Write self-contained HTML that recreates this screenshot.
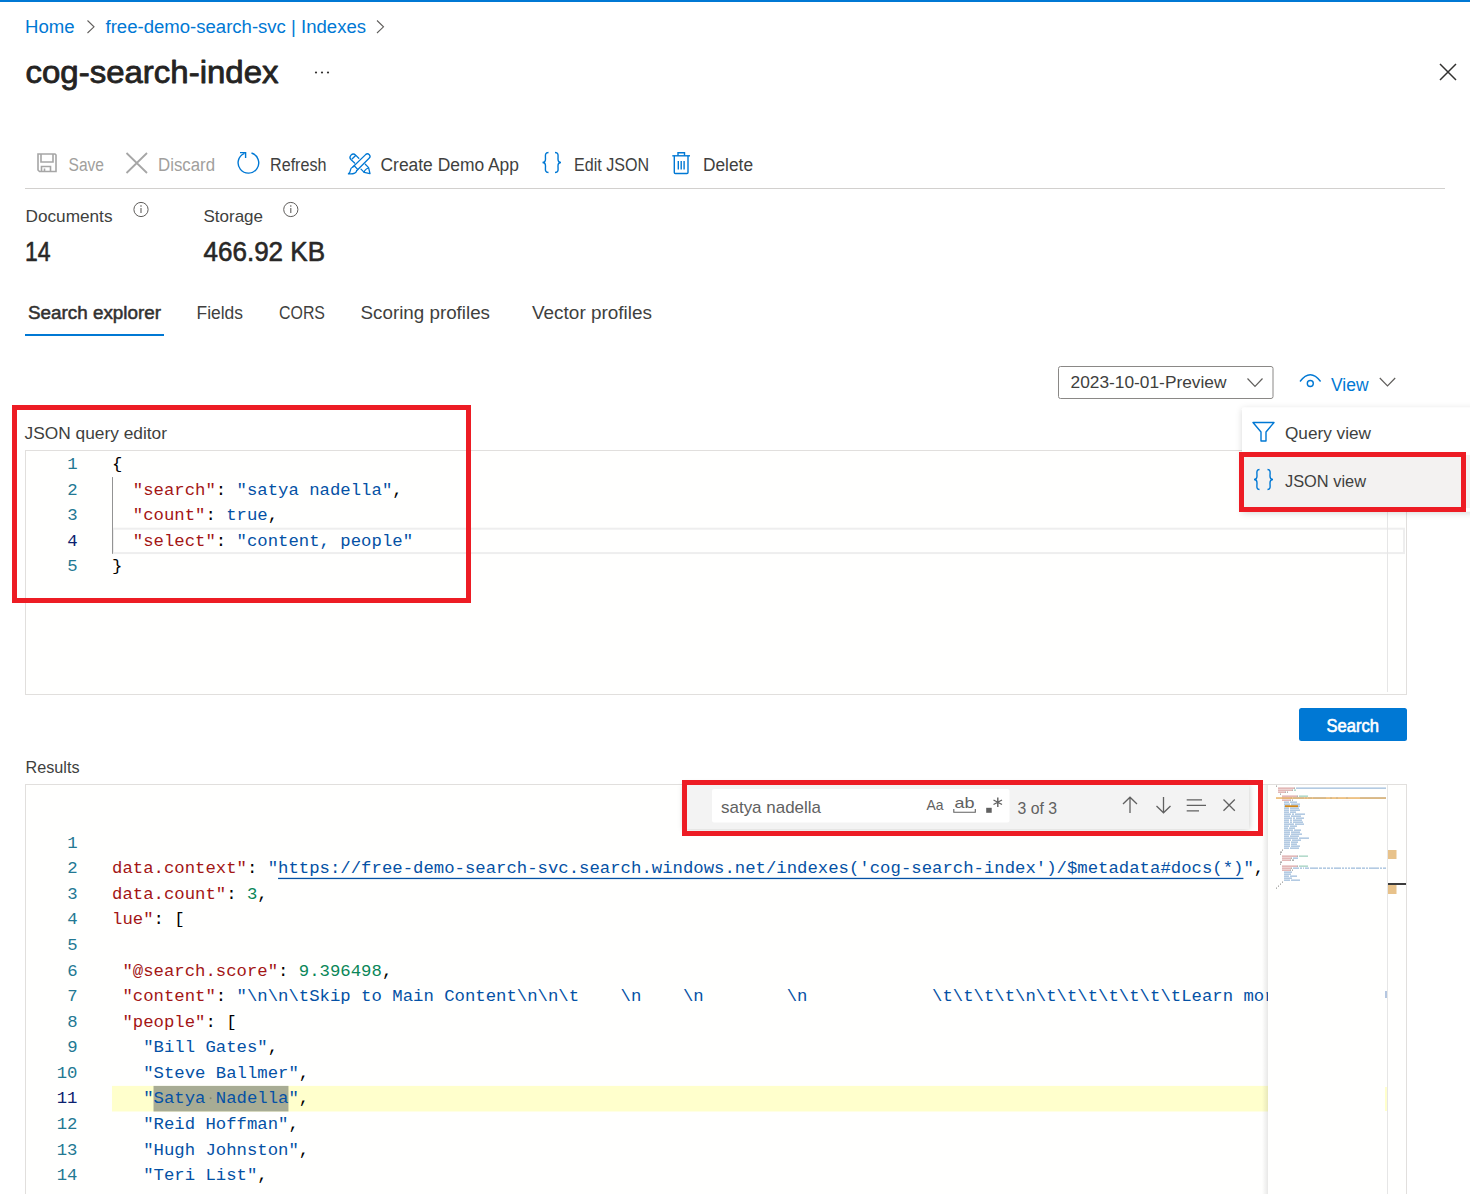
<!DOCTYPE html>
<html><head><meta charset="utf-8"><title>cog-search-index</title>
<style>
html,body{margin:0;padding:0;background:#ffffff;width:1470px;height:1194px;overflow:hidden;}
svg{display:block;font-family:"Liberation Sans",sans-serif;}
</style></head>
<body>
<svg width="1470" height="1194" viewBox="0 0 1470 1194">
<rect x="0" y="0" width="1470" height="1194" fill="#ffffff"/>
<rect x="0" y="0" width="1470" height="2" fill="#0078d4"/>
<text x="25" y="33" font-size="18" fill="#0078d4" textLength="49.5" lengthAdjust="spacingAndGlyphs">Home</text>
<path d="M87.5 20.5 L94 26.8 L87.5 33" stroke="#605e5c" stroke-width="1.1" fill="none"/>
<text x="105.5" y="33" font-size="18" fill="#0078d4" textLength="260.5" lengthAdjust="spacingAndGlyphs">free-demo-search-svc | Indexes</text>
<path d="M377 20.5 L383.5 26.8 L377 33" stroke="#605e5c" stroke-width="1.1" fill="none"/>
<text x="25.5" y="83" font-size="31" fill="#242322" textLength="253" lengthAdjust="spacingAndGlyphs" stroke="#242322" stroke-width="0.8" stroke-linejoin="round">cog-search-index</text>
<circle cx="316" cy="72.5" r="1.1" fill="#323130"/>
<circle cx="322" cy="72.5" r="1.1" fill="#323130"/>
<circle cx="328" cy="72.5" r="1.1" fill="#323130"/>
<path d="M1440 64 L1456 80 M1456 64 L1440 80" stroke="#323130" stroke-width="1.5" fill="none"/>
<g fill="none" stroke="#a6a6a6" stroke-width="1.6"><path d="M38 154 H55 L56 155 V171.5 H39.5 L38 170 Z"/><path d="M41 154 V162 H53 V154"/><path d="M41.5 171.5 V166.5 H50.5 V171.5 M44.5 168.5 V171.5"/></g>
<text x="68.5" y="171" font-size="18" fill="#a19f9d" textLength="35.5" lengthAdjust="spacingAndGlyphs">Save</text>
<path d="M126.5 153 L147 173 M147 153 L126.5 173" stroke="#a6a6a6" stroke-width="1.8" fill="none"/>
<text x="158" y="171" font-size="18" fill="#a19f9d" textLength="57" lengthAdjust="spacingAndGlyphs">Discard</text>
<path d="M251.5 153 A10.3 10.3 0 1 1 244.5 153.3" stroke="#0078d4" stroke-width="1.4" fill="none"/><path d="M240 152.6 H245.6 V158" stroke="#0078d4" stroke-width="1.4" fill="none"/>
<text x="270" y="171" font-size="18" fill="#403f3e" textLength="56.5" lengthAdjust="spacingAndGlyphs">Refresh</text>
<g fill="none" stroke="#0078d4" stroke-width="1.3" stroke-linejoin="round" stroke-linecap="round"><path d="M352.8 167 L365.6 154.6 Q367.5 152.9 369.3 154.7 Q371 156.5 369.1 158.3 L356.6 170.7"/><path d="M354.2 165.7 L357.7 169.4"/><path d="M352.8 167 Q350.6 168 350.4 170.3 Q350.2 172.6 348.4 173.8 Q352.3 174.3 354.7 173.1 Q356.5 172.2 356.6 170.7"/><path d="M358.8 158.3 L355.6 155.1 Q353.3 152.8 351 155.1 Q348.8 157.4 351.1 159.7 L354.6 163"/><path d="M352.3 158.8 L355.6 155.5"/><path d="M365.3 164.3 L368.6 167.6 L370 173.6 L364.2 172.4 L361 169.1"/><path d="M364.2 172.4 Q364.3 169.8 368.3 168"/></g>
<text x="380.5" y="171" font-size="18" fill="#403f3e" textLength="138.5" lengthAdjust="spacingAndGlyphs">Create Demo App</text>
<g fill="none" stroke="#0078d4" stroke-width="1.4"><path d="M548.5 152.5 C544.5 152.5 545.5 156 545.5 159 C545.5 161.5 544.5 162.5 542.5 162.5 C544.5 162.5 545.5 163.5 545.5 166 C545.5 169 544.5 172.5 548.5 172.5"/><path d="M555 152.5 C559 152.5 558 156 558 159 C558 161.5 559 162.5 561 162.5 C559 162.5 558 163.5 558 166 C558 169 559 172.5 555 172.5"/></g>
<text x="574" y="171" font-size="18" fill="#403f3e" textLength="75" lengthAdjust="spacingAndGlyphs">Edit JSON</text>
<g fill="none" stroke="#0078d4" stroke-width="1.4"><path d="M672.3 155.8 H690"/><path d="M678 155.8 V152.8 H684.5 V155.8"/><path d="M674.3 155.8 V172.5 Q674.3 173.5 675.3 173.5 H687 Q688 173.5 688 172.5 V155.8"/><path d="M678.3 161 V169.5 M681.2 161 V169.5 M684.1 161 V169.5"/></g>
<text x="703" y="171" font-size="18" fill="#403f3e" textLength="50" lengthAdjust="spacingAndGlyphs">Delete</text>
<rect x="25" y="188" width="1420" height="1" fill="#d2d0ce"/>
<text x="25.5" y="222.2" font-size="17" fill="#403f3e" textLength="87" lengthAdjust="spacingAndGlyphs">Documents</text>
<circle cx="141" cy="209.5" r="7.1" stroke="#605e5c" stroke-width="1" fill="none"/><path d="M141 208 V213" stroke="#605e5c" stroke-width="1.1"/><circle cx="141" cy="206" r="0.8" fill="#605e5c"/>
<text x="203.5" y="222.2" font-size="17" fill="#403f3e" textLength="59.5" lengthAdjust="spacingAndGlyphs">Storage</text>
<circle cx="290.8" cy="209.5" r="7.1" stroke="#605e5c" stroke-width="1" fill="none"/><path d="M290.8 208 V213" stroke="#605e5c" stroke-width="1.1"/><circle cx="290.8" cy="206" r="0.8" fill="#605e5c"/>
<text x="25" y="260.7" font-size="27" fill="#292827" textLength="25.5" lengthAdjust="spacingAndGlyphs" stroke="#292827" stroke-width="0.6" stroke-linejoin="round">14</text>
<text x="203.5" y="260.7" font-size="27" fill="#292827" textLength="121.5" lengthAdjust="spacingAndGlyphs" stroke="#292827" stroke-width="0.6" stroke-linejoin="round">466.92 KB</text>
<text x="28" y="318.7" font-size="18" fill="#323130" textLength="133" lengthAdjust="spacingAndGlyphs" stroke="#323130" stroke-width="0.5" stroke-linejoin="round">Search explorer</text>
<rect x="25" y="334" width="139" height="2" fill="#0078d4"/>
<text x="196.5" y="318.7" font-size="18" fill="#403f3e" textLength="46.5" lengthAdjust="spacingAndGlyphs">Fields</text>
<text x="279" y="318.7" font-size="18" fill="#403f3e" textLength="46" lengthAdjust="spacingAndGlyphs">CORS</text>
<text x="360.5" y="318.7" font-size="18" fill="#403f3e" textLength="129.5" lengthAdjust="spacingAndGlyphs">Scoring profiles</text>
<text x="532" y="318.7" font-size="18" fill="#403f3e" textLength="120" lengthAdjust="spacingAndGlyphs">Vector profiles</text>
<rect x="1058.5" y="366.5" width="214.5" height="32" rx="2" fill="#fff" stroke="#8a8886" stroke-width="1"/>
<text x="1070.5" y="388" font-size="17" fill="#403f3e" textLength="156" lengthAdjust="spacingAndGlyphs">2023-10-01-Preview</text>
<path d="M1247.5 378.5 L1255 386.3 L1262.5 378.5" stroke="#605e5c" stroke-width="1.2" fill="none"/>
<g fill="none" stroke="#0078d4" stroke-width="1.4"><path d="M1300 381.5 Q1310.3 368 1320.6 381.5"/><circle cx="1310.3" cy="383.5" r="3"/></g>
<text x="1331" y="390.5" font-size="18" fill="#0078d4" textLength="37.5" lengthAdjust="spacingAndGlyphs">View</text>
<path d="M1379.8 378 L1387.5 386 L1395.2 378" stroke="#605e5c" stroke-width="1.2" fill="none"/>
<defs><filter id="sh" x="-10%" y="-10%" width="120%" height="130%"><feDropShadow dx="0" dy="1.5" stdDeviation="3" flood-color="#000" flood-opacity="0.16"/></filter><filter id="sh2" x="-5%" y="-30%" width="110%" height="160%"><feDropShadow dx="0" dy="0" stdDeviation="3" flood-color="#000" flood-opacity="0.22"/></filter><linearGradient id="mmsh" x1="0" x2="1" y1="0" y2="0"><stop offset="0" stop-color="#000" stop-opacity="0"/><stop offset="1" stop-color="#000" stop-opacity="0.09"/></linearGradient></defs>
<text x="24.5" y="438.7" font-size="17" fill="#403f3e" textLength="142.5" lengthAdjust="spacingAndGlyphs">JSON query editor</text>
<rect x="25.5" y="450.5" width="1381" height="244" fill="#fffffe" stroke="#e1dfdd" stroke-width="1"/>
<rect x="113" y="528.71" width="1291" height="24.37" fill="none" stroke="#eeeeee" stroke-width="2"/>
<rect x="112" y="477.07" width="1" height="76.71" fill="#939393"/>
<text x="77.5" y="469.00" font-family="Liberation Mono" font-size="17.3" fill="#237893" text-anchor="end">1</text>
<text x="112.00" y="469.00" font-family="Liberation Mono" font-size="17.3" fill="#000000" textLength="10.38" lengthAdjust="spacing" xml:space="preserve">{</text>
<text x="77.5" y="494.57" font-family="Liberation Mono" font-size="17.3" fill="#237893" text-anchor="end">2</text>
<text x="132.76" y="494.57" font-family="Liberation Mono" font-size="17.3" fill="#a31515" textLength="83.04" lengthAdjust="spacing" xml:space="preserve">&quot;search&quot;</text>
<text x="215.80" y="494.57" font-family="Liberation Mono" font-size="17.3" fill="#000000" textLength="20.76" lengthAdjust="spacing" xml:space="preserve">: </text>
<text x="236.56" y="494.57" font-family="Liberation Mono" font-size="17.3" fill="#0451a5" textLength="155.70" lengthAdjust="spacing" xml:space="preserve">&quot;satya nadella&quot;</text>
<text x="392.26" y="494.57" font-family="Liberation Mono" font-size="17.3" fill="#000000" textLength="10.38" lengthAdjust="spacing" xml:space="preserve">,</text>
<text x="77.5" y="520.14" font-family="Liberation Mono" font-size="17.3" fill="#237893" text-anchor="end">3</text>
<text x="132.76" y="520.14" font-family="Liberation Mono" font-size="17.3" fill="#a31515" textLength="72.66" lengthAdjust="spacing" xml:space="preserve">&quot;count&quot;</text>
<text x="205.42" y="520.14" font-family="Liberation Mono" font-size="17.3" fill="#000000" textLength="20.76" lengthAdjust="spacing" xml:space="preserve">: </text>
<text x="226.18" y="520.14" font-family="Liberation Mono" font-size="17.3" fill="#0451a5" textLength="41.52" lengthAdjust="spacing" xml:space="preserve">true</text>
<text x="267.70" y="520.14" font-family="Liberation Mono" font-size="17.3" fill="#000000" textLength="10.38" lengthAdjust="spacing" xml:space="preserve">,</text>
<text x="77.5" y="545.71" font-family="Liberation Mono" font-size="17.3" fill="#0b216f" text-anchor="end">4</text>
<text x="132.76" y="545.71" font-family="Liberation Mono" font-size="17.3" fill="#a31515" textLength="83.04" lengthAdjust="spacing" xml:space="preserve">&quot;select&quot;</text>
<text x="215.80" y="545.71" font-family="Liberation Mono" font-size="17.3" fill="#000000" textLength="20.76" lengthAdjust="spacing" xml:space="preserve">: </text>
<text x="236.56" y="545.71" font-family="Liberation Mono" font-size="17.3" fill="#0451a5" textLength="176.46" lengthAdjust="spacing" xml:space="preserve">&quot;content, people&quot;</text>
<text x="77.5" y="571.28" font-family="Liberation Mono" font-size="17.3" fill="#237893" text-anchor="end">5</text>
<text x="112.00" y="571.28" font-family="Liberation Mono" font-size="17.3" fill="#000000" textLength="10.38" lengthAdjust="spacing" xml:space="preserve">}</text>
<rect x="1387" y="451" width="1" height="241" fill="#e6e6e6"/>
<rect x="1299" y="708" width="108" height="33" rx="2.5" fill="#0078d4"/>
<text x="1326.5" y="732" font-size="17.5" fill="#ffffff" textLength="52.5" lengthAdjust="spacingAndGlyphs" stroke="#ffffff" stroke-width="0.6" stroke-linejoin="round">Search</text>
<text x="25.5" y="773" font-size="17" fill="#403f3e" textLength="54" lengthAdjust="spacingAndGlyphs">Results</text>
<rect x="25.5" y="784.5" width="1381" height="500" fill="#fffffe" stroke="#e1dfdd" stroke-width="1"/>
<rect x="112" y="1085.9" width="1156" height="25.57" fill="#ffffcc"/>
<rect x="153.52" y="1085.9" width="134.94" height="25.57" fill="#a8ac94"/>
<circle cx="210.61" cy="1098.3" r="1" fill="#7f8472"/>
<clipPath id="rclip"><rect x="100" y="785" width="1168" height="420"/></clipPath>
<g clip-path="url(#rclip)">
<text x="112.00" y="873.27" font-family="Liberation Mono" font-size="17.3" fill="#a31515" textLength="134.94" lengthAdjust="spacing" xml:space="preserve">data.context&quot;</text>
<text x="246.94" y="873.27" font-family="Liberation Mono" font-size="17.3" fill="#000000" textLength="20.76" lengthAdjust="spacing" xml:space="preserve">: </text>
<text x="267.70" y="873.27" font-family="Liberation Mono" font-size="17.3" fill="#0451a5" textLength="10.38" lengthAdjust="spacing" xml:space="preserve">&quot;</text>
<text x="278.08" y="873.27" font-family="Liberation Mono" font-size="17.3" fill="#0451a5" textLength="62.28" lengthAdjust="spacing" xml:space="preserve">https:</text>
<text x="340.36" y="873.27" font-family="Liberation Mono" font-size="17.3" fill="#0451a5" textLength="903.06" lengthAdjust="spacing" xml:space="preserve">//free-demo-search-svc.search.windows.net/indexes(&#x27;cog-search-index&#x27;)/$metadata#docs(*)</text>
<text x="1243.42" y="873.27" font-family="Liberation Mono" font-size="17.3" fill="#0451a5" textLength="10.38" lengthAdjust="spacing" xml:space="preserve">&quot;</text>
<text x="1253.80" y="873.27" font-family="Liberation Mono" font-size="17.3" fill="#000000" textLength="10.38" lengthAdjust="spacing" xml:space="preserve">,</text>
<text x="112.00" y="898.84" font-family="Liberation Mono" font-size="17.3" fill="#a31515" textLength="114.18" lengthAdjust="spacing" xml:space="preserve">data.count&quot;</text>
<text x="226.18" y="898.84" font-family="Liberation Mono" font-size="17.3" fill="#000000" textLength="20.76" lengthAdjust="spacing" xml:space="preserve">: </text>
<text x="246.94" y="898.84" font-family="Liberation Mono" font-size="17.3" fill="#098658" textLength="10.38" lengthAdjust="spacing" xml:space="preserve">3</text>
<text x="257.32" y="898.84" font-family="Liberation Mono" font-size="17.3" fill="#000000" textLength="10.38" lengthAdjust="spacing" xml:space="preserve">,</text>
<text x="112.00" y="924.41" font-family="Liberation Mono" font-size="17.3" fill="#a31515" textLength="41.52" lengthAdjust="spacing" xml:space="preserve">lue&quot;</text>
<text x="153.52" y="924.41" font-family="Liberation Mono" font-size="17.3" fill="#000000" textLength="20.76" lengthAdjust="spacing" xml:space="preserve">: </text>
<text x="174.28" y="924.41" font-family="Liberation Mono" font-size="17.3" fill="#000000" textLength="10.38" lengthAdjust="spacing" xml:space="preserve">[</text>
<text x="122.38" y="975.55" font-family="Liberation Mono" font-size="17.3" fill="#a31515" textLength="155.70" lengthAdjust="spacing" xml:space="preserve">&quot;@search.score&quot;</text>
<text x="278.08" y="975.55" font-family="Liberation Mono" font-size="17.3" fill="#000000" textLength="20.76" lengthAdjust="spacing" xml:space="preserve">: </text>
<text x="298.84" y="975.55" font-family="Liberation Mono" font-size="17.3" fill="#098658" textLength="83.04" lengthAdjust="spacing" xml:space="preserve">9.396498</text>
<text x="381.88" y="975.55" font-family="Liberation Mono" font-size="17.3" fill="#000000" textLength="10.38" lengthAdjust="spacing" xml:space="preserve">,</text>
<text x="122.38" y="1001.12" font-family="Liberation Mono" font-size="17.3" fill="#a31515" textLength="93.42" lengthAdjust="spacing" xml:space="preserve">&quot;content&quot;</text>
<text x="215.80" y="1001.12" font-family="Liberation Mono" font-size="17.3" fill="#000000" textLength="20.76" lengthAdjust="spacing" xml:space="preserve">: </text>
<text x="236.56" y="1001.12" font-family="Liberation Mono" font-size="17.3" fill="#0451a5" textLength="1038.00" lengthAdjust="spacing" xml:space="preserve">&quot;\n\n\tSkip to Main Content\n\n\t    \n    \n        \n            \t\t\t\t\n\t\t\t\t\t\t\tLearn mor</text>
<text x="122.38" y="1026.69" font-family="Liberation Mono" font-size="17.3" fill="#a31515" textLength="83.04" lengthAdjust="spacing" xml:space="preserve">&quot;people&quot;</text>
<text x="205.42" y="1026.69" font-family="Liberation Mono" font-size="17.3" fill="#000000" textLength="20.76" lengthAdjust="spacing" xml:space="preserve">: </text>
<text x="226.18" y="1026.69" font-family="Liberation Mono" font-size="17.3" fill="#000000" textLength="10.38" lengthAdjust="spacing" xml:space="preserve">[</text>
<text x="143.14" y="1052.26" font-family="Liberation Mono" font-size="17.3" fill="#0451a5" textLength="124.56" lengthAdjust="spacing" xml:space="preserve">&quot;Bill Gates&quot;</text>
<text x="267.70" y="1052.26" font-family="Liberation Mono" font-size="17.3" fill="#000000" textLength="10.38" lengthAdjust="spacing" xml:space="preserve">,</text>
<text x="143.14" y="1077.83" font-family="Liberation Mono" font-size="17.3" fill="#0451a5" textLength="155.70" lengthAdjust="spacing" xml:space="preserve">&quot;Steve Ballmer&quot;</text>
<text x="298.84" y="1077.83" font-family="Liberation Mono" font-size="17.3" fill="#000000" textLength="10.38" lengthAdjust="spacing" xml:space="preserve">,</text>
<text x="143.14" y="1103.40" font-family="Liberation Mono" font-size="17.3" fill="#0451a5" textLength="155.70" lengthAdjust="spacing" xml:space="preserve">&quot;Satya Nadella&quot;</text>
<text x="298.84" y="1103.40" font-family="Liberation Mono" font-size="17.3" fill="#000000" textLength="10.38" lengthAdjust="spacing" xml:space="preserve">,</text>
<text x="143.14" y="1128.97" font-family="Liberation Mono" font-size="17.3" fill="#0451a5" textLength="145.32" lengthAdjust="spacing" xml:space="preserve">&quot;Reid Hoffman&quot;</text>
<text x="288.46" y="1128.97" font-family="Liberation Mono" font-size="17.3" fill="#000000" textLength="10.38" lengthAdjust="spacing" xml:space="preserve">,</text>
<text x="143.14" y="1154.54" font-family="Liberation Mono" font-size="17.3" fill="#0451a5" textLength="155.70" lengthAdjust="spacing" xml:space="preserve">&quot;Hugh Johnston&quot;</text>
<text x="298.84" y="1154.54" font-family="Liberation Mono" font-size="17.3" fill="#000000" textLength="10.38" lengthAdjust="spacing" xml:space="preserve">,</text>
<text x="143.14" y="1180.11" font-family="Liberation Mono" font-size="17.3" fill="#0451a5" textLength="114.18" lengthAdjust="spacing" xml:space="preserve">&quot;Teri List&quot;</text>
<text x="257.32" y="1180.11" font-family="Liberation Mono" font-size="17.3" fill="#000000" textLength="10.38" lengthAdjust="spacing" xml:space="preserve">,</text>
<rect x="278.08000000000004" y="877.8" width="965.34" height="1.3" fill="#0451a5"/>
</g>
<text x="77.5" y="847.70" font-family="Liberation Mono" font-size="17.3" fill="#237893" text-anchor="end">1</text>
<text x="77.5" y="873.27" font-family="Liberation Mono" font-size="17.3" fill="#237893" text-anchor="end">2</text>
<text x="77.5" y="898.84" font-family="Liberation Mono" font-size="17.3" fill="#237893" text-anchor="end">3</text>
<text x="77.5" y="924.41" font-family="Liberation Mono" font-size="17.3" fill="#237893" text-anchor="end">4</text>
<text x="77.5" y="949.98" font-family="Liberation Mono" font-size="17.3" fill="#237893" text-anchor="end">5</text>
<text x="77.5" y="975.55" font-family="Liberation Mono" font-size="17.3" fill="#237893" text-anchor="end">6</text>
<text x="77.5" y="1001.12" font-family="Liberation Mono" font-size="17.3" fill="#237893" text-anchor="end">7</text>
<text x="77.5" y="1026.69" font-family="Liberation Mono" font-size="17.3" fill="#237893" text-anchor="end">8</text>
<text x="77.5" y="1052.26" font-family="Liberation Mono" font-size="17.3" fill="#237893" text-anchor="end">9</text>
<text x="77.5" y="1077.83" font-family="Liberation Mono" font-size="17.3" fill="#237893" text-anchor="end">10</text>
<text x="77.5" y="1103.40" font-family="Liberation Mono" font-size="17.3" fill="#0b216f" text-anchor="end">11</text>
<text x="77.5" y="1128.97" font-family="Liberation Mono" font-size="17.3" fill="#237893" text-anchor="end">12</text>
<text x="77.5" y="1154.54" font-family="Liberation Mono" font-size="17.3" fill="#237893" text-anchor="end">13</text>
<text x="77.5" y="1180.11" font-family="Liberation Mono" font-size="17.3" fill="#237893" text-anchor="end">14</text>
<rect x="1262" y="785" width="6" height="409" fill="url(#mmsh)"/>
<rect x="1268" y="785" width="119" height="409" fill="#fffffe"/>
<clipPath id="mmclip"><rect x="1268" y="785" width="118" height="409"/></clipPath><g clip-path="url(#mmclip)">
<rect x="1276" y="797.3" width="110" height="1.6" fill="#f0c890"/>
<rect x="1276" y="785.5" width="0.9" height="1.3" fill="#000000" opacity="0.42"/>
<rect x="1278" y="787.5" width="0.9" height="1.3" fill="#a31515" opacity="0.42"/>
<rect x="1279" y="787.5" width="0.9" height="1.3" fill="#a31515" opacity="0.42"/>
<rect x="1280" y="787.5" width="0.9" height="1.3" fill="#a31515" opacity="0.42"/>
<rect x="1281" y="787.5" width="0.9" height="1.3" fill="#a31515" opacity="0.42"/>
<rect x="1282" y="787.5" width="0.9" height="1.3" fill="#a31515" opacity="0.42"/>
<rect x="1283" y="787.5" width="0.9" height="1.3" fill="#a31515" opacity="0.42"/>
<rect x="1284" y="787.5" width="0.9" height="1.3" fill="#a31515" opacity="0.42"/>
<rect x="1285" y="787.5" width="0.9" height="1.3" fill="#a31515" opacity="0.42"/>
<rect x="1286" y="787.5" width="0.9" height="1.3" fill="#a31515" opacity="0.42"/>
<rect x="1287" y="787.5" width="0.9" height="1.3" fill="#a31515" opacity="0.42"/>
<rect x="1288" y="787.5" width="0.9" height="1.3" fill="#a31515" opacity="0.42"/>
<rect x="1289" y="787.5" width="0.9" height="1.3" fill="#a31515" opacity="0.42"/>
<rect x="1290" y="787.5" width="0.9" height="1.3" fill="#a31515" opacity="0.42"/>
<rect x="1291" y="787.5" width="0.9" height="1.3" fill="#a31515" opacity="0.42"/>
<rect x="1292" y="787.5" width="0.9" height="1.3" fill="#a31515" opacity="0.42"/>
<rect x="1293" y="787.5" width="0.9" height="1.3" fill="#a31515" opacity="0.42"/>
<rect x="1294" y="787.5" width="0.9" height="1.3" fill="#000000" opacity="0.42"/>
<rect x="1296" y="787.5" width="0.9" height="1.3" fill="#0451a5" opacity="0.42"/>
<rect x="1297" y="787.5" width="0.9" height="1.3" fill="#0451a5" opacity="0.42"/>
<rect x="1298" y="787.5" width="0.9" height="1.3" fill="#0451a5" opacity="0.42"/>
<rect x="1299" y="787.5" width="0.9" height="1.3" fill="#0451a5" opacity="0.42"/>
<rect x="1300" y="787.5" width="0.9" height="1.3" fill="#0451a5" opacity="0.42"/>
<rect x="1301" y="787.5" width="0.9" height="1.3" fill="#0451a5" opacity="0.42"/>
<rect x="1302" y="787.5" width="0.9" height="1.3" fill="#0451a5" opacity="0.42"/>
<rect x="1303" y="787.5" width="0.9" height="1.3" fill="#0451a5" opacity="0.42"/>
<rect x="1304" y="787.5" width="0.9" height="1.3" fill="#0451a5" opacity="0.42"/>
<rect x="1305" y="787.5" width="0.9" height="1.3" fill="#0451a5" opacity="0.42"/>
<rect x="1306" y="787.5" width="0.9" height="1.3" fill="#0451a5" opacity="0.42"/>
<rect x="1307" y="787.5" width="0.9" height="1.3" fill="#0451a5" opacity="0.42"/>
<rect x="1308" y="787.5" width="0.9" height="1.3" fill="#0451a5" opacity="0.42"/>
<rect x="1309" y="787.5" width="0.9" height="1.3" fill="#0451a5" opacity="0.42"/>
<rect x="1310" y="787.5" width="0.9" height="1.3" fill="#0451a5" opacity="0.42"/>
<rect x="1311" y="787.5" width="0.9" height="1.3" fill="#0451a5" opacity="0.42"/>
<rect x="1312" y="787.5" width="0.9" height="1.3" fill="#0451a5" opacity="0.42"/>
<rect x="1313" y="787.5" width="0.9" height="1.3" fill="#0451a5" opacity="0.42"/>
<rect x="1314" y="787.5" width="0.9" height="1.3" fill="#0451a5" opacity="0.42"/>
<rect x="1315" y="787.5" width="0.9" height="1.3" fill="#0451a5" opacity="0.42"/>
<rect x="1316" y="787.5" width="0.9" height="1.3" fill="#0451a5" opacity="0.42"/>
<rect x="1317" y="787.5" width="0.9" height="1.3" fill="#0451a5" opacity="0.42"/>
<rect x="1318" y="787.5" width="0.9" height="1.3" fill="#0451a5" opacity="0.42"/>
<rect x="1319" y="787.5" width="0.9" height="1.3" fill="#0451a5" opacity="0.42"/>
<rect x="1320" y="787.5" width="0.9" height="1.3" fill="#0451a5" opacity="0.42"/>
<rect x="1321" y="787.5" width="0.9" height="1.3" fill="#0451a5" opacity="0.42"/>
<rect x="1322" y="787.5" width="0.9" height="1.3" fill="#0451a5" opacity="0.42"/>
<rect x="1323" y="787.5" width="0.9" height="1.3" fill="#0451a5" opacity="0.42"/>
<rect x="1324" y="787.5" width="0.9" height="1.3" fill="#0451a5" opacity="0.42"/>
<rect x="1325" y="787.5" width="0.9" height="1.3" fill="#0451a5" opacity="0.42"/>
<rect x="1326" y="787.5" width="0.9" height="1.3" fill="#0451a5" opacity="0.42"/>
<rect x="1327" y="787.5" width="0.9" height="1.3" fill="#0451a5" opacity="0.42"/>
<rect x="1328" y="787.5" width="0.9" height="1.3" fill="#0451a5" opacity="0.42"/>
<rect x="1329" y="787.5" width="0.9" height="1.3" fill="#0451a5" opacity="0.42"/>
<rect x="1330" y="787.5" width="0.9" height="1.3" fill="#0451a5" opacity="0.42"/>
<rect x="1331" y="787.5" width="0.9" height="1.3" fill="#0451a5" opacity="0.42"/>
<rect x="1332" y="787.5" width="0.9" height="1.3" fill="#0451a5" opacity="0.42"/>
<rect x="1333" y="787.5" width="0.9" height="1.3" fill="#0451a5" opacity="0.42"/>
<rect x="1334" y="787.5" width="0.9" height="1.3" fill="#0451a5" opacity="0.42"/>
<rect x="1335" y="787.5" width="0.9" height="1.3" fill="#0451a5" opacity="0.42"/>
<rect x="1336" y="787.5" width="0.9" height="1.3" fill="#0451a5" opacity="0.42"/>
<rect x="1337" y="787.5" width="0.9" height="1.3" fill="#0451a5" opacity="0.42"/>
<rect x="1338" y="787.5" width="0.9" height="1.3" fill="#0451a5" opacity="0.42"/>
<rect x="1339" y="787.5" width="0.9" height="1.3" fill="#0451a5" opacity="0.42"/>
<rect x="1340" y="787.5" width="0.9" height="1.3" fill="#0451a5" opacity="0.42"/>
<rect x="1341" y="787.5" width="0.9" height="1.3" fill="#0451a5" opacity="0.42"/>
<rect x="1342" y="787.5" width="0.9" height="1.3" fill="#0451a5" opacity="0.42"/>
<rect x="1343" y="787.5" width="0.9" height="1.3" fill="#0451a5" opacity="0.42"/>
<rect x="1344" y="787.5" width="0.9" height="1.3" fill="#0451a5" opacity="0.42"/>
<rect x="1345" y="787.5" width="0.9" height="1.3" fill="#0451a5" opacity="0.42"/>
<rect x="1346" y="787.5" width="0.9" height="1.3" fill="#0451a5" opacity="0.42"/>
<rect x="1347" y="787.5" width="0.9" height="1.3" fill="#0451a5" opacity="0.42"/>
<rect x="1348" y="787.5" width="0.9" height="1.3" fill="#0451a5" opacity="0.42"/>
<rect x="1349" y="787.5" width="0.9" height="1.3" fill="#0451a5" opacity="0.42"/>
<rect x="1350" y="787.5" width="0.9" height="1.3" fill="#0451a5" opacity="0.42"/>
<rect x="1351" y="787.5" width="0.9" height="1.3" fill="#0451a5" opacity="0.42"/>
<rect x="1352" y="787.5" width="0.9" height="1.3" fill="#0451a5" opacity="0.42"/>
<rect x="1353" y="787.5" width="0.9" height="1.3" fill="#0451a5" opacity="0.42"/>
<rect x="1354" y="787.5" width="0.9" height="1.3" fill="#0451a5" opacity="0.42"/>
<rect x="1355" y="787.5" width="0.9" height="1.3" fill="#0451a5" opacity="0.42"/>
<rect x="1356" y="787.5" width="0.9" height="1.3" fill="#0451a5" opacity="0.42"/>
<rect x="1357" y="787.5" width="0.9" height="1.3" fill="#0451a5" opacity="0.42"/>
<rect x="1358" y="787.5" width="0.9" height="1.3" fill="#0451a5" opacity="0.42"/>
<rect x="1359" y="787.5" width="0.9" height="1.3" fill="#0451a5" opacity="0.42"/>
<rect x="1360" y="787.5" width="0.9" height="1.3" fill="#0451a5" opacity="0.42"/>
<rect x="1361" y="787.5" width="0.9" height="1.3" fill="#0451a5" opacity="0.42"/>
<rect x="1362" y="787.5" width="0.9" height="1.3" fill="#0451a5" opacity="0.42"/>
<rect x="1363" y="787.5" width="0.9" height="1.3" fill="#0451a5" opacity="0.42"/>
<rect x="1364" y="787.5" width="0.9" height="1.3" fill="#0451a5" opacity="0.42"/>
<rect x="1365" y="787.5" width="0.9" height="1.3" fill="#0451a5" opacity="0.42"/>
<rect x="1366" y="787.5" width="0.9" height="1.3" fill="#0451a5" opacity="0.42"/>
<rect x="1367" y="787.5" width="0.9" height="1.3" fill="#0451a5" opacity="0.42"/>
<rect x="1368" y="787.5" width="0.9" height="1.3" fill="#0451a5" opacity="0.42"/>
<rect x="1369" y="787.5" width="0.9" height="1.3" fill="#0451a5" opacity="0.42"/>
<rect x="1370" y="787.5" width="0.9" height="1.3" fill="#0451a5" opacity="0.42"/>
<rect x="1371" y="787.5" width="0.9" height="1.3" fill="#0451a5" opacity="0.42"/>
<rect x="1372" y="787.5" width="0.9" height="1.3" fill="#0451a5" opacity="0.42"/>
<rect x="1373" y="787.5" width="0.9" height="1.3" fill="#0451a5" opacity="0.42"/>
<rect x="1374" y="787.5" width="0.9" height="1.3" fill="#0451a5" opacity="0.42"/>
<rect x="1375" y="787.5" width="0.9" height="1.3" fill="#0451a5" opacity="0.42"/>
<rect x="1376" y="787.5" width="0.9" height="1.3" fill="#0451a5" opacity="0.42"/>
<rect x="1377" y="787.5" width="0.9" height="1.3" fill="#0451a5" opacity="0.42"/>
<rect x="1378" y="787.5" width="0.9" height="1.3" fill="#0451a5" opacity="0.42"/>
<rect x="1379" y="787.5" width="0.9" height="1.3" fill="#0451a5" opacity="0.42"/>
<rect x="1380" y="787.5" width="0.9" height="1.3" fill="#0451a5" opacity="0.42"/>
<rect x="1381" y="787.5" width="0.9" height="1.3" fill="#0451a5" opacity="0.42"/>
<rect x="1382" y="787.5" width="0.9" height="1.3" fill="#0451a5" opacity="0.42"/>
<rect x="1383" y="787.5" width="0.9" height="1.3" fill="#0451a5" opacity="0.42"/>
<rect x="1384" y="787.5" width="0.9" height="1.3" fill="#0451a5" opacity="0.42"/>
<rect x="1385" y="787.5" width="0.9" height="1.3" fill="#0451a5" opacity="0.42"/>
<rect x="1386" y="787.5" width="0.9" height="1.3" fill="#0451a5" opacity="0.42"/>
<rect x="1387" y="787.5" width="0.9" height="1.3" fill="#0451a5" opacity="0.42"/>
<rect x="1388" y="787.5" width="0.9" height="1.3" fill="#0451a5" opacity="0.42"/>
<rect x="1389" y="787.5" width="0.9" height="1.3" fill="#0451a5" opacity="0.42"/>
<rect x="1390" y="787.5" width="0.9" height="1.3" fill="#0451a5" opacity="0.42"/>
<rect x="1391" y="787.5" width="0.9" height="1.3" fill="#0451a5" opacity="0.42"/>
<rect x="1278" y="789.5" width="0.9" height="1.3" fill="#a31515" opacity="0.42"/>
<rect x="1279" y="789.5" width="0.9" height="1.3" fill="#a31515" opacity="0.42"/>
<rect x="1280" y="789.5" width="0.9" height="1.3" fill="#a31515" opacity="0.42"/>
<rect x="1281" y="789.5" width="0.9" height="1.3" fill="#a31515" opacity="0.42"/>
<rect x="1282" y="789.5" width="0.9" height="1.3" fill="#a31515" opacity="0.42"/>
<rect x="1283" y="789.5" width="0.9" height="1.3" fill="#a31515" opacity="0.42"/>
<rect x="1284" y="789.5" width="0.9" height="1.3" fill="#a31515" opacity="0.42"/>
<rect x="1285" y="789.5" width="0.9" height="1.3" fill="#a31515" opacity="0.42"/>
<rect x="1286" y="789.5" width="0.9" height="1.3" fill="#a31515" opacity="0.42"/>
<rect x="1287" y="789.5" width="0.9" height="1.3" fill="#a31515" opacity="0.42"/>
<rect x="1288" y="789.5" width="0.9" height="1.3" fill="#a31515" opacity="0.42"/>
<rect x="1289" y="789.5" width="0.9" height="1.3" fill="#a31515" opacity="0.42"/>
<rect x="1290" y="789.5" width="0.9" height="1.3" fill="#a31515" opacity="0.42"/>
<rect x="1291" y="789.5" width="0.9" height="1.3" fill="#a31515" opacity="0.42"/>
<rect x="1292" y="789.5" width="0.9" height="1.3" fill="#000000" opacity="0.42"/>
<rect x="1294" y="789.5" width="0.9" height="1.3" fill="#098658" opacity="0.42"/>
<rect x="1295" y="789.5" width="0.9" height="1.3" fill="#098658" opacity="0.42"/>
<rect x="1278" y="791.5" width="0.9" height="1.3" fill="#a31515" opacity="0.42"/>
<rect x="1279" y="791.5" width="0.9" height="1.3" fill="#a31515" opacity="0.42"/>
<rect x="1280" y="791.5" width="0.9" height="1.3" fill="#a31515" opacity="0.42"/>
<rect x="1281" y="791.5" width="0.9" height="1.3" fill="#a31515" opacity="0.42"/>
<rect x="1282" y="791.5" width="0.9" height="1.3" fill="#a31515" opacity="0.42"/>
<rect x="1283" y="791.5" width="0.9" height="1.3" fill="#a31515" opacity="0.42"/>
<rect x="1284" y="791.5" width="0.9" height="1.3" fill="#a31515" opacity="0.42"/>
<rect x="1285" y="791.5" width="0.9" height="1.3" fill="#000000" opacity="0.42"/>
<rect x="1287" y="791.5" width="0.9" height="1.3" fill="#000000" opacity="0.42"/>
<rect x="1280" y="793.5" width="0.9" height="1.3" fill="#000000" opacity="0.42"/>
<rect x="1282" y="795.5" width="0.9" height="1.3" fill="#a31515" opacity="0.42"/>
<rect x="1283" y="795.5" width="0.9" height="1.3" fill="#a31515" opacity="0.42"/>
<rect x="1284" y="795.5" width="0.9" height="1.3" fill="#a31515" opacity="0.42"/>
<rect x="1285" y="795.5" width="0.9" height="1.3" fill="#a31515" opacity="0.42"/>
<rect x="1286" y="795.5" width="0.9" height="1.3" fill="#a31515" opacity="0.42"/>
<rect x="1287" y="795.5" width="0.9" height="1.3" fill="#a31515" opacity="0.42"/>
<rect x="1288" y="795.5" width="0.9" height="1.3" fill="#a31515" opacity="0.42"/>
<rect x="1289" y="795.5" width="0.9" height="1.3" fill="#a31515" opacity="0.42"/>
<rect x="1290" y="795.5" width="0.9" height="1.3" fill="#a31515" opacity="0.42"/>
<rect x="1291" y="795.5" width="0.9" height="1.3" fill="#a31515" opacity="0.42"/>
<rect x="1292" y="795.5" width="0.9" height="1.3" fill="#a31515" opacity="0.42"/>
<rect x="1293" y="795.5" width="0.9" height="1.3" fill="#a31515" opacity="0.42"/>
<rect x="1294" y="795.5" width="0.9" height="1.3" fill="#a31515" opacity="0.42"/>
<rect x="1295" y="795.5" width="0.9" height="1.3" fill="#a31515" opacity="0.42"/>
<rect x="1296" y="795.5" width="0.9" height="1.3" fill="#a31515" opacity="0.42"/>
<rect x="1297" y="795.5" width="0.9" height="1.3" fill="#000000" opacity="0.42"/>
<rect x="1299" y="795.5" width="0.9" height="1.3" fill="#098658" opacity="0.42"/>
<rect x="1300" y="795.5" width="0.9" height="1.3" fill="#098658" opacity="0.42"/>
<rect x="1301" y="795.5" width="0.9" height="1.3" fill="#098658" opacity="0.42"/>
<rect x="1302" y="795.5" width="0.9" height="1.3" fill="#098658" opacity="0.42"/>
<rect x="1303" y="795.5" width="0.9" height="1.3" fill="#098658" opacity="0.42"/>
<rect x="1304" y="795.5" width="0.9" height="1.3" fill="#098658" opacity="0.42"/>
<rect x="1305" y="795.5" width="0.9" height="1.3" fill="#098658" opacity="0.42"/>
<rect x="1306" y="795.5" width="0.9" height="1.3" fill="#098658" opacity="0.42"/>
<rect x="1307" y="795.5" width="0.9" height="1.3" fill="#098658" opacity="0.42"/>
<rect x="1282" y="797.5" width="0.9" height="1.3" fill="#a31515" opacity="0.42"/>
<rect x="1283" y="797.5" width="0.9" height="1.3" fill="#a31515" opacity="0.42"/>
<rect x="1284" y="797.5" width="0.9" height="1.3" fill="#a31515" opacity="0.42"/>
<rect x="1285" y="797.5" width="0.9" height="1.3" fill="#a31515" opacity="0.42"/>
<rect x="1286" y="797.5" width="0.9" height="1.3" fill="#a31515" opacity="0.42"/>
<rect x="1287" y="797.5" width="0.9" height="1.3" fill="#a31515" opacity="0.42"/>
<rect x="1288" y="797.5" width="0.9" height="1.3" fill="#a31515" opacity="0.42"/>
<rect x="1289" y="797.5" width="0.9" height="1.3" fill="#a31515" opacity="0.42"/>
<rect x="1290" y="797.5" width="0.9" height="1.3" fill="#a31515" opacity="0.42"/>
<rect x="1291" y="797.5" width="0.9" height="1.3" fill="#000000" opacity="0.42"/>
<rect x="1293" y="797.5" width="0.9" height="1.3" fill="#0451a5" opacity="0.42"/>
<rect x="1294" y="797.5" width="0.9" height="1.3" fill="#0451a5" opacity="0.42"/>
<rect x="1295" y="797.5" width="0.9" height="1.3" fill="#0451a5" opacity="0.42"/>
<rect x="1296" y="797.5" width="0.9" height="1.3" fill="#0451a5" opacity="0.42"/>
<rect x="1297" y="797.5" width="0.9" height="1.3" fill="#0451a5" opacity="0.42"/>
<rect x="1298" y="797.5" width="0.9" height="1.3" fill="#0451a5" opacity="0.42"/>
<rect x="1299" y="797.5" width="0.9" height="1.3" fill="#0451a5" opacity="0.42"/>
<rect x="1300" y="797.5" width="0.9" height="1.3" fill="#0451a5" opacity="0.42"/>
<rect x="1301" y="797.5" width="0.9" height="1.3" fill="#0451a5" opacity="0.42"/>
<rect x="1302" y="797.5" width="0.9" height="1.3" fill="#0451a5" opacity="0.42"/>
<rect x="1303" y="797.5" width="0.9" height="1.3" fill="#0451a5" opacity="0.42"/>
<rect x="1305" y="797.5" width="0.9" height="1.3" fill="#0451a5" opacity="0.42"/>
<rect x="1306" y="797.5" width="0.9" height="1.3" fill="#0451a5" opacity="0.42"/>
<rect x="1308" y="797.5" width="0.9" height="1.3" fill="#0451a5" opacity="0.42"/>
<rect x="1309" y="797.5" width="0.9" height="1.3" fill="#0451a5" opacity="0.42"/>
<rect x="1310" y="797.5" width="0.9" height="1.3" fill="#0451a5" opacity="0.42"/>
<rect x="1311" y="797.5" width="0.9" height="1.3" fill="#0451a5" opacity="0.42"/>
<rect x="1313" y="797.5" width="0.9" height="1.3" fill="#0451a5" opacity="0.42"/>
<rect x="1314" y="797.5" width="0.9" height="1.3" fill="#0451a5" opacity="0.42"/>
<rect x="1315" y="797.5" width="0.9" height="1.3" fill="#0451a5" opacity="0.42"/>
<rect x="1316" y="797.5" width="0.9" height="1.3" fill="#0451a5" opacity="0.42"/>
<rect x="1317" y="797.5" width="0.9" height="1.3" fill="#0451a5" opacity="0.42"/>
<rect x="1318" y="797.5" width="0.9" height="1.3" fill="#0451a5" opacity="0.42"/>
<rect x="1319" y="797.5" width="0.9" height="1.3" fill="#0451a5" opacity="0.42"/>
<rect x="1320" y="797.5" width="0.9" height="1.3" fill="#0451a5" opacity="0.42"/>
<rect x="1321" y="797.5" width="0.9" height="1.3" fill="#0451a5" opacity="0.42"/>
<rect x="1322" y="797.5" width="0.9" height="1.3" fill="#0451a5" opacity="0.42"/>
<rect x="1323" y="797.5" width="0.9" height="1.3" fill="#0451a5" opacity="0.42"/>
<rect x="1324" y="797.5" width="0.9" height="1.3" fill="#0451a5" opacity="0.42"/>
<rect x="1325" y="797.5" width="0.9" height="1.3" fill="#0451a5" opacity="0.42"/>
<rect x="1330" y="797.5" width="0.9" height="1.3" fill="#0451a5" opacity="0.42"/>
<rect x="1331" y="797.5" width="0.9" height="1.3" fill="#0451a5" opacity="0.42"/>
<rect x="1336" y="797.5" width="0.9" height="1.3" fill="#0451a5" opacity="0.42"/>
<rect x="1337" y="797.5" width="0.9" height="1.3" fill="#0451a5" opacity="0.42"/>
<rect x="1346" y="797.5" width="0.9" height="1.3" fill="#0451a5" opacity="0.42"/>
<rect x="1347" y="797.5" width="0.9" height="1.3" fill="#0451a5" opacity="0.42"/>
<rect x="1360" y="797.5" width="0.9" height="1.3" fill="#0451a5" opacity="0.42"/>
<rect x="1361" y="797.5" width="0.9" height="1.3" fill="#0451a5" opacity="0.42"/>
<rect x="1362" y="797.5" width="0.9" height="1.3" fill="#0451a5" opacity="0.42"/>
<rect x="1363" y="797.5" width="0.9" height="1.3" fill="#0451a5" opacity="0.42"/>
<rect x="1364" y="797.5" width="0.9" height="1.3" fill="#0451a5" opacity="0.42"/>
<rect x="1365" y="797.5" width="0.9" height="1.3" fill="#0451a5" opacity="0.42"/>
<rect x="1366" y="797.5" width="0.9" height="1.3" fill="#0451a5" opacity="0.42"/>
<rect x="1367" y="797.5" width="0.9" height="1.3" fill="#0451a5" opacity="0.42"/>
<rect x="1368" y="797.5" width="0.9" height="1.3" fill="#0451a5" opacity="0.42"/>
<rect x="1369" y="797.5" width="0.9" height="1.3" fill="#0451a5" opacity="0.42"/>
<rect x="1370" y="797.5" width="0.9" height="1.3" fill="#0451a5" opacity="0.42"/>
<rect x="1371" y="797.5" width="0.9" height="1.3" fill="#0451a5" opacity="0.42"/>
<rect x="1372" y="797.5" width="0.9" height="1.3" fill="#0451a5" opacity="0.42"/>
<rect x="1373" y="797.5" width="0.9" height="1.3" fill="#0451a5" opacity="0.42"/>
<rect x="1374" y="797.5" width="0.9" height="1.3" fill="#0451a5" opacity="0.42"/>
<rect x="1375" y="797.5" width="0.9" height="1.3" fill="#0451a5" opacity="0.42"/>
<rect x="1376" y="797.5" width="0.9" height="1.3" fill="#0451a5" opacity="0.42"/>
<rect x="1377" y="797.5" width="0.9" height="1.3" fill="#0451a5" opacity="0.42"/>
<rect x="1378" y="797.5" width="0.9" height="1.3" fill="#0451a5" opacity="0.42"/>
<rect x="1379" y="797.5" width="0.9" height="1.3" fill="#0451a5" opacity="0.42"/>
<rect x="1380" y="797.5" width="0.9" height="1.3" fill="#0451a5" opacity="0.42"/>
<rect x="1381" y="797.5" width="0.9" height="1.3" fill="#0451a5" opacity="0.42"/>
<rect x="1382" y="797.5" width="0.9" height="1.3" fill="#0451a5" opacity="0.42"/>
<rect x="1383" y="797.5" width="0.9" height="1.3" fill="#0451a5" opacity="0.42"/>
<rect x="1384" y="797.5" width="0.9" height="1.3" fill="#0451a5" opacity="0.42"/>
<rect x="1385" y="797.5" width="0.9" height="1.3" fill="#0451a5" opacity="0.42"/>
<rect x="1386" y="797.5" width="0.9" height="1.3" fill="#0451a5" opacity="0.42"/>
<rect x="1387" y="797.5" width="0.9" height="1.3" fill="#0451a5" opacity="0.42"/>
<rect x="1388" y="797.5" width="0.9" height="1.3" fill="#0451a5" opacity="0.42"/>
<rect x="1390" y="797.5" width="0.9" height="1.3" fill="#0451a5" opacity="0.42"/>
<rect x="1391" y="797.5" width="0.9" height="1.3" fill="#0451a5" opacity="0.42"/>
<rect x="1392" y="797.5" width="0.9" height="1.3" fill="#0451a5" opacity="0.42"/>
<rect x="1393" y="797.5" width="0.9" height="1.3" fill="#0451a5" opacity="0.42"/>
<rect x="1395" y="797.5" width="0.9" height="1.3" fill="#0451a5" opacity="0.42"/>
<rect x="1396" y="797.5" width="0.9" height="1.3" fill="#0451a5" opacity="0.42"/>
<rect x="1397" y="797.5" width="0.9" height="1.3" fill="#0451a5" opacity="0.42"/>
<rect x="1398" y="797.5" width="0.9" height="1.3" fill="#0451a5" opacity="0.42"/>
<rect x="1399" y="797.5" width="0.9" height="1.3" fill="#0451a5" opacity="0.42"/>
<rect x="1401" y="797.5" width="0.9" height="1.3" fill="#0451a5" opacity="0.42"/>
<rect x="1402" y="797.5" width="0.9" height="1.3" fill="#0451a5" opacity="0.42"/>
<rect x="1403" y="797.5" width="0.9" height="1.3" fill="#0451a5" opacity="0.42"/>
<rect x="1404" y="797.5" width="0.9" height="1.3" fill="#0451a5" opacity="0.42"/>
<rect x="1405" y="797.5" width="0.9" height="1.3" fill="#0451a5" opacity="0.42"/>
<rect x="1406" y="797.5" width="0.9" height="1.3" fill="#0451a5" opacity="0.42"/>
<rect x="1407" y="797.5" width="0.9" height="1.3" fill="#0451a5" opacity="0.42"/>
<rect x="1408" y="797.5" width="0.9" height="1.3" fill="#0451a5" opacity="0.42"/>
<rect x="1409" y="797.5" width="0.9" height="1.3" fill="#0451a5" opacity="0.42"/>
<rect x="1282" y="799.5" width="0.9" height="1.3" fill="#a31515" opacity="0.42"/>
<rect x="1283" y="799.5" width="0.9" height="1.3" fill="#a31515" opacity="0.42"/>
<rect x="1284" y="799.5" width="0.9" height="1.3" fill="#a31515" opacity="0.42"/>
<rect x="1285" y="799.5" width="0.9" height="1.3" fill="#a31515" opacity="0.42"/>
<rect x="1286" y="799.5" width="0.9" height="1.3" fill="#a31515" opacity="0.42"/>
<rect x="1287" y="799.5" width="0.9" height="1.3" fill="#a31515" opacity="0.42"/>
<rect x="1288" y="799.5" width="0.9" height="1.3" fill="#a31515" opacity="0.42"/>
<rect x="1289" y="799.5" width="0.9" height="1.3" fill="#a31515" opacity="0.42"/>
<rect x="1290" y="799.5" width="0.9" height="1.3" fill="#000000" opacity="0.42"/>
<rect x="1292" y="799.5" width="0.9" height="1.3" fill="#000000" opacity="0.42"/>
<rect x="1284" y="801.5" width="0.9" height="1.3" fill="#0451a5" opacity="0.42"/>
<rect x="1285" y="801.5" width="0.9" height="1.3" fill="#0451a5" opacity="0.42"/>
<rect x="1286" y="801.5" width="0.9" height="1.3" fill="#0451a5" opacity="0.42"/>
<rect x="1287" y="801.5" width="0.9" height="1.3" fill="#0451a5" opacity="0.42"/>
<rect x="1288" y="801.5" width="0.9" height="1.3" fill="#0451a5" opacity="0.42"/>
<rect x="1290" y="801.5" width="0.9" height="1.3" fill="#0451a5" opacity="0.42"/>
<rect x="1291" y="801.5" width="0.9" height="1.3" fill="#0451a5" opacity="0.42"/>
<rect x="1292" y="801.5" width="0.9" height="1.3" fill="#0451a5" opacity="0.42"/>
<rect x="1293" y="801.5" width="0.9" height="1.3" fill="#0451a5" opacity="0.42"/>
<rect x="1294" y="801.5" width="0.9" height="1.3" fill="#0451a5" opacity="0.42"/>
<rect x="1295" y="801.5" width="0.9" height="1.3" fill="#0451a5" opacity="0.42"/>
<rect x="1296" y="801.5" width="0.9" height="1.3" fill="#0451a5" opacity="0.42"/>
<rect x="1284" y="803.5" width="0.9" height="1.3" fill="#0451a5" opacity="0.42"/>
<rect x="1285" y="803.5" width="0.9" height="1.3" fill="#0451a5" opacity="0.42"/>
<rect x="1286" y="803.5" width="0.9" height="1.3" fill="#0451a5" opacity="0.42"/>
<rect x="1287" y="803.5" width="0.9" height="1.3" fill="#0451a5" opacity="0.42"/>
<rect x="1288" y="803.5" width="0.9" height="1.3" fill="#0451a5" opacity="0.42"/>
<rect x="1289" y="803.5" width="0.9" height="1.3" fill="#0451a5" opacity="0.42"/>
<rect x="1291" y="803.5" width="0.9" height="1.3" fill="#0451a5" opacity="0.42"/>
<rect x="1292" y="803.5" width="0.9" height="1.3" fill="#0451a5" opacity="0.42"/>
<rect x="1293" y="803.5" width="0.9" height="1.3" fill="#0451a5" opacity="0.42"/>
<rect x="1294" y="803.5" width="0.9" height="1.3" fill="#0451a5" opacity="0.42"/>
<rect x="1295" y="803.5" width="0.9" height="1.3" fill="#0451a5" opacity="0.42"/>
<rect x="1296" y="803.5" width="0.9" height="1.3" fill="#0451a5" opacity="0.42"/>
<rect x="1297" y="803.5" width="0.9" height="1.3" fill="#0451a5" opacity="0.42"/>
<rect x="1298" y="803.5" width="0.9" height="1.3" fill="#0451a5" opacity="0.42"/>
<rect x="1299" y="803.5" width="0.9" height="1.3" fill="#0451a5" opacity="0.42"/>
<rect x="1284" y="805.5" width="0.9" height="1.3" fill="#0451a5" opacity="0.42"/>
<rect x="1285" y="805.5" width="0.9" height="1.3" fill="#0451a5" opacity="0.42"/>
<rect x="1286" y="805.5" width="0.9" height="1.3" fill="#0451a5" opacity="0.42"/>
<rect x="1287" y="805.5" width="0.9" height="1.3" fill="#0451a5" opacity="0.42"/>
<rect x="1288" y="805.5" width="0.9" height="1.3" fill="#0451a5" opacity="0.42"/>
<rect x="1289" y="805.5" width="0.9" height="1.3" fill="#0451a5" opacity="0.42"/>
<rect x="1291" y="805.5" width="0.9" height="1.3" fill="#0451a5" opacity="0.42"/>
<rect x="1292" y="805.5" width="0.9" height="1.3" fill="#0451a5" opacity="0.42"/>
<rect x="1293" y="805.5" width="0.9" height="1.3" fill="#0451a5" opacity="0.42"/>
<rect x="1294" y="805.5" width="0.9" height="1.3" fill="#0451a5" opacity="0.42"/>
<rect x="1295" y="805.5" width="0.9" height="1.3" fill="#0451a5" opacity="0.42"/>
<rect x="1296" y="805.5" width="0.9" height="1.3" fill="#0451a5" opacity="0.42"/>
<rect x="1297" y="805.5" width="0.9" height="1.3" fill="#0451a5" opacity="0.42"/>
<rect x="1298" y="805.5" width="0.9" height="1.3" fill="#0451a5" opacity="0.42"/>
<rect x="1299" y="805.5" width="0.9" height="1.3" fill="#0451a5" opacity="0.42"/>
<rect x="1284" y="807.5" width="0.9" height="1.3" fill="#0451a5" opacity="0.42"/>
<rect x="1285" y="807.5" width="0.9" height="1.3" fill="#0451a5" opacity="0.42"/>
<rect x="1286" y="807.5" width="0.9" height="1.3" fill="#0451a5" opacity="0.42"/>
<rect x="1287" y="807.5" width="0.9" height="1.3" fill="#0451a5" opacity="0.42"/>
<rect x="1288" y="807.5" width="0.9" height="1.3" fill="#0451a5" opacity="0.42"/>
<rect x="1290" y="807.5" width="0.9" height="1.3" fill="#0451a5" opacity="0.42"/>
<rect x="1291" y="807.5" width="0.9" height="1.3" fill="#0451a5" opacity="0.42"/>
<rect x="1292" y="807.5" width="0.9" height="1.3" fill="#0451a5" opacity="0.42"/>
<rect x="1293" y="807.5" width="0.9" height="1.3" fill="#0451a5" opacity="0.42"/>
<rect x="1294" y="807.5" width="0.9" height="1.3" fill="#0451a5" opacity="0.42"/>
<rect x="1295" y="807.5" width="0.9" height="1.3" fill="#0451a5" opacity="0.42"/>
<rect x="1296" y="807.5" width="0.9" height="1.3" fill="#0451a5" opacity="0.42"/>
<rect x="1297" y="807.5" width="0.9" height="1.3" fill="#0451a5" opacity="0.42"/>
<rect x="1298" y="807.5" width="0.9" height="1.3" fill="#0451a5" opacity="0.42"/>
<rect x="1284" y="809.5" width="0.9" height="1.3" fill="#0451a5" opacity="0.42"/>
<rect x="1285" y="809.5" width="0.9" height="1.3" fill="#0451a5" opacity="0.42"/>
<rect x="1286" y="809.5" width="0.9" height="1.3" fill="#0451a5" opacity="0.42"/>
<rect x="1287" y="809.5" width="0.9" height="1.3" fill="#0451a5" opacity="0.42"/>
<rect x="1288" y="809.5" width="0.9" height="1.3" fill="#0451a5" opacity="0.42"/>
<rect x="1290" y="809.5" width="0.9" height="1.3" fill="#0451a5" opacity="0.42"/>
<rect x="1291" y="809.5" width="0.9" height="1.3" fill="#0451a5" opacity="0.42"/>
<rect x="1292" y="809.5" width="0.9" height="1.3" fill="#0451a5" opacity="0.42"/>
<rect x="1293" y="809.5" width="0.9" height="1.3" fill="#0451a5" opacity="0.42"/>
<rect x="1294" y="809.5" width="0.9" height="1.3" fill="#0451a5" opacity="0.42"/>
<rect x="1295" y="809.5" width="0.9" height="1.3" fill="#0451a5" opacity="0.42"/>
<rect x="1296" y="809.5" width="0.9" height="1.3" fill="#0451a5" opacity="0.42"/>
<rect x="1297" y="809.5" width="0.9" height="1.3" fill="#0451a5" opacity="0.42"/>
<rect x="1298" y="809.5" width="0.9" height="1.3" fill="#0451a5" opacity="0.42"/>
<rect x="1299" y="809.5" width="0.9" height="1.3" fill="#0451a5" opacity="0.42"/>
<rect x="1284" y="811.5" width="0.9" height="1.3" fill="#0451a5" opacity="0.42"/>
<rect x="1285" y="811.5" width="0.9" height="1.3" fill="#0451a5" opacity="0.42"/>
<rect x="1286" y="811.5" width="0.9" height="1.3" fill="#0451a5" opacity="0.42"/>
<rect x="1287" y="811.5" width="0.9" height="1.3" fill="#0451a5" opacity="0.42"/>
<rect x="1288" y="811.5" width="0.9" height="1.3" fill="#0451a5" opacity="0.42"/>
<rect x="1290" y="811.5" width="0.9" height="1.3" fill="#0451a5" opacity="0.42"/>
<rect x="1291" y="811.5" width="0.9" height="1.3" fill="#0451a5" opacity="0.42"/>
<rect x="1292" y="811.5" width="0.9" height="1.3" fill="#0451a5" opacity="0.42"/>
<rect x="1293" y="811.5" width="0.9" height="1.3" fill="#0451a5" opacity="0.42"/>
<rect x="1294" y="811.5" width="0.9" height="1.3" fill="#0451a5" opacity="0.42"/>
<rect x="1295" y="811.5" width="0.9" height="1.3" fill="#0451a5" opacity="0.42"/>
<rect x="1284" y="813.5" width="0.9" height="1.3" fill="#0451a5" opacity="0.42"/>
<rect x="1285" y="813.5" width="0.9" height="1.3" fill="#0451a5" opacity="0.42"/>
<rect x="1286" y="813.5" width="0.9" height="1.3" fill="#0451a5" opacity="0.42"/>
<rect x="1287" y="813.5" width="0.9" height="1.3" fill="#0451a5" opacity="0.42"/>
<rect x="1288" y="813.5" width="0.9" height="1.3" fill="#0451a5" opacity="0.42"/>
<rect x="1289" y="813.5" width="0.9" height="1.3" fill="#0451a5" opacity="0.42"/>
<rect x="1290" y="813.5" width="0.9" height="1.3" fill="#0451a5" opacity="0.42"/>
<rect x="1292" y="813.5" width="0.9" height="1.3" fill="#0451a5" opacity="0.42"/>
<rect x="1293" y="813.5" width="0.9" height="1.3" fill="#0451a5" opacity="0.42"/>
<rect x="1295" y="813.5" width="0.9" height="1.3" fill="#0451a5" opacity="0.42"/>
<rect x="1296" y="813.5" width="0.9" height="1.3" fill="#0451a5" opacity="0.42"/>
<rect x="1297" y="813.5" width="0.9" height="1.3" fill="#0451a5" opacity="0.42"/>
<rect x="1298" y="813.5" width="0.9" height="1.3" fill="#0451a5" opacity="0.42"/>
<rect x="1299" y="813.5" width="0.9" height="1.3" fill="#0451a5" opacity="0.42"/>
<rect x="1300" y="813.5" width="0.9" height="1.3" fill="#0451a5" opacity="0.42"/>
<rect x="1301" y="813.5" width="0.9" height="1.3" fill="#0451a5" opacity="0.42"/>
<rect x="1302" y="813.5" width="0.9" height="1.3" fill="#0451a5" opacity="0.42"/>
<rect x="1303" y="813.5" width="0.9" height="1.3" fill="#0451a5" opacity="0.42"/>
<rect x="1304" y="813.5" width="0.9" height="1.3" fill="#0451a5" opacity="0.42"/>
<rect x="1284" y="815.5" width="0.9" height="1.3" fill="#0451a5" opacity="0.42"/>
<rect x="1285" y="815.5" width="0.9" height="1.3" fill="#0451a5" opacity="0.42"/>
<rect x="1286" y="815.5" width="0.9" height="1.3" fill="#0451a5" opacity="0.42"/>
<rect x="1287" y="815.5" width="0.9" height="1.3" fill="#0451a5" opacity="0.42"/>
<rect x="1288" y="815.5" width="0.9" height="1.3" fill="#0451a5" opacity="0.42"/>
<rect x="1289" y="815.5" width="0.9" height="1.3" fill="#0451a5" opacity="0.42"/>
<rect x="1291" y="815.5" width="0.9" height="1.3" fill="#0451a5" opacity="0.42"/>
<rect x="1292" y="815.5" width="0.9" height="1.3" fill="#0451a5" opacity="0.42"/>
<rect x="1293" y="815.5" width="0.9" height="1.3" fill="#0451a5" opacity="0.42"/>
<rect x="1294" y="815.5" width="0.9" height="1.3" fill="#0451a5" opacity="0.42"/>
<rect x="1295" y="815.5" width="0.9" height="1.3" fill="#0451a5" opacity="0.42"/>
<rect x="1296" y="815.5" width="0.9" height="1.3" fill="#0451a5" opacity="0.42"/>
<rect x="1297" y="815.5" width="0.9" height="1.3" fill="#0451a5" opacity="0.42"/>
<rect x="1298" y="815.5" width="0.9" height="1.3" fill="#0451a5" opacity="0.42"/>
<rect x="1299" y="815.5" width="0.9" height="1.3" fill="#0451a5" opacity="0.42"/>
<rect x="1300" y="815.5" width="0.9" height="1.3" fill="#0451a5" opacity="0.42"/>
<rect x="1284" y="817.5" width="0.9" height="1.3" fill="#0451a5" opacity="0.42"/>
<rect x="1285" y="817.5" width="0.9" height="1.3" fill="#0451a5" opacity="0.42"/>
<rect x="1286" y="817.5" width="0.9" height="1.3" fill="#0451a5" opacity="0.42"/>
<rect x="1287" y="817.5" width="0.9" height="1.3" fill="#0451a5" opacity="0.42"/>
<rect x="1288" y="817.5" width="0.9" height="1.3" fill="#0451a5" opacity="0.42"/>
<rect x="1289" y="817.5" width="0.9" height="1.3" fill="#0451a5" opacity="0.42"/>
<rect x="1290" y="817.5" width="0.9" height="1.3" fill="#0451a5" opacity="0.42"/>
<rect x="1291" y="817.5" width="0.9" height="1.3" fill="#0451a5" opacity="0.42"/>
<rect x="1293" y="817.5" width="0.9" height="1.3" fill="#0451a5" opacity="0.42"/>
<rect x="1294" y="817.5" width="0.9" height="1.3" fill="#0451a5" opacity="0.42"/>
<rect x="1296" y="817.5" width="0.9" height="1.3" fill="#0451a5" opacity="0.42"/>
<rect x="1297" y="817.5" width="0.9" height="1.3" fill="#0451a5" opacity="0.42"/>
<rect x="1298" y="817.5" width="0.9" height="1.3" fill="#0451a5" opacity="0.42"/>
<rect x="1299" y="817.5" width="0.9" height="1.3" fill="#0451a5" opacity="0.42"/>
<rect x="1300" y="817.5" width="0.9" height="1.3" fill="#0451a5" opacity="0.42"/>
<rect x="1301" y="817.5" width="0.9" height="1.3" fill="#0451a5" opacity="0.42"/>
<rect x="1302" y="817.5" width="0.9" height="1.3" fill="#0451a5" opacity="0.42"/>
<rect x="1303" y="817.5" width="0.9" height="1.3" fill="#0451a5" opacity="0.42"/>
<rect x="1284" y="819.5" width="0.9" height="1.3" fill="#0451a5" opacity="0.42"/>
<rect x="1285" y="819.5" width="0.9" height="1.3" fill="#0451a5" opacity="0.42"/>
<rect x="1286" y="819.5" width="0.9" height="1.3" fill="#0451a5" opacity="0.42"/>
<rect x="1287" y="819.5" width="0.9" height="1.3" fill="#0451a5" opacity="0.42"/>
<rect x="1288" y="819.5" width="0.9" height="1.3" fill="#0451a5" opacity="0.42"/>
<rect x="1290" y="819.5" width="0.9" height="1.3" fill="#0451a5" opacity="0.42"/>
<rect x="1291" y="819.5" width="0.9" height="1.3" fill="#0451a5" opacity="0.42"/>
<rect x="1293" y="819.5" width="0.9" height="1.3" fill="#0451a5" opacity="0.42"/>
<rect x="1294" y="819.5" width="0.9" height="1.3" fill="#0451a5" opacity="0.42"/>
<rect x="1295" y="819.5" width="0.9" height="1.3" fill="#0451a5" opacity="0.42"/>
<rect x="1296" y="819.5" width="0.9" height="1.3" fill="#0451a5" opacity="0.42"/>
<rect x="1297" y="819.5" width="0.9" height="1.3" fill="#0451a5" opacity="0.42"/>
<rect x="1298" y="819.5" width="0.9" height="1.3" fill="#0451a5" opacity="0.42"/>
<rect x="1299" y="819.5" width="0.9" height="1.3" fill="#0451a5" opacity="0.42"/>
<rect x="1300" y="819.5" width="0.9" height="1.3" fill="#0451a5" opacity="0.42"/>
<rect x="1301" y="819.5" width="0.9" height="1.3" fill="#0451a5" opacity="0.42"/>
<rect x="1284" y="821.5" width="0.9" height="1.3" fill="#0451a5" opacity="0.42"/>
<rect x="1285" y="821.5" width="0.9" height="1.3" fill="#0451a5" opacity="0.42"/>
<rect x="1286" y="821.5" width="0.9" height="1.3" fill="#0451a5" opacity="0.42"/>
<rect x="1287" y="821.5" width="0.9" height="1.3" fill="#0451a5" opacity="0.42"/>
<rect x="1288" y="821.5" width="0.9" height="1.3" fill="#0451a5" opacity="0.42"/>
<rect x="1290" y="821.5" width="0.9" height="1.3" fill="#0451a5" opacity="0.42"/>
<rect x="1291" y="821.5" width="0.9" height="1.3" fill="#0451a5" opacity="0.42"/>
<rect x="1293" y="821.5" width="0.9" height="1.3" fill="#0451a5" opacity="0.42"/>
<rect x="1294" y="821.5" width="0.9" height="1.3" fill="#0451a5" opacity="0.42"/>
<rect x="1295" y="821.5" width="0.9" height="1.3" fill="#0451a5" opacity="0.42"/>
<rect x="1296" y="821.5" width="0.9" height="1.3" fill="#0451a5" opacity="0.42"/>
<rect x="1297" y="821.5" width="0.9" height="1.3" fill="#0451a5" opacity="0.42"/>
<rect x="1298" y="821.5" width="0.9" height="1.3" fill="#0451a5" opacity="0.42"/>
<rect x="1299" y="821.5" width="0.9" height="1.3" fill="#0451a5" opacity="0.42"/>
<rect x="1300" y="821.5" width="0.9" height="1.3" fill="#0451a5" opacity="0.42"/>
<rect x="1301" y="821.5" width="0.9" height="1.3" fill="#0451a5" opacity="0.42"/>
<rect x="1302" y="821.5" width="0.9" height="1.3" fill="#0451a5" opacity="0.42"/>
<rect x="1284" y="823.5" width="0.9" height="1.3" fill="#0451a5" opacity="0.42"/>
<rect x="1285" y="823.5" width="0.9" height="1.3" fill="#0451a5" opacity="0.42"/>
<rect x="1286" y="823.5" width="0.9" height="1.3" fill="#0451a5" opacity="0.42"/>
<rect x="1287" y="823.5" width="0.9" height="1.3" fill="#0451a5" opacity="0.42"/>
<rect x="1288" y="823.5" width="0.9" height="1.3" fill="#0451a5" opacity="0.42"/>
<rect x="1289" y="823.5" width="0.9" height="1.3" fill="#0451a5" opacity="0.42"/>
<rect x="1290" y="823.5" width="0.9" height="1.3" fill="#0451a5" opacity="0.42"/>
<rect x="1291" y="823.5" width="0.9" height="1.3" fill="#0451a5" opacity="0.42"/>
<rect x="1292" y="823.5" width="0.9" height="1.3" fill="#0451a5" opacity="0.42"/>
<rect x="1293" y="823.5" width="0.9" height="1.3" fill="#0451a5" opacity="0.42"/>
<rect x="1295" y="823.5" width="0.9" height="1.3" fill="#0451a5" opacity="0.42"/>
<rect x="1296" y="823.5" width="0.9" height="1.3" fill="#0451a5" opacity="0.42"/>
<rect x="1297" y="823.5" width="0.9" height="1.3" fill="#0451a5" opacity="0.42"/>
<rect x="1298" y="823.5" width="0.9" height="1.3" fill="#0451a5" opacity="0.42"/>
<rect x="1299" y="823.5" width="0.9" height="1.3" fill="#0451a5" opacity="0.42"/>
<rect x="1300" y="823.5" width="0.9" height="1.3" fill="#0451a5" opacity="0.42"/>
<rect x="1301" y="823.5" width="0.9" height="1.3" fill="#0451a5" opacity="0.42"/>
<rect x="1302" y="823.5" width="0.9" height="1.3" fill="#0451a5" opacity="0.42"/>
<rect x="1303" y="823.5" width="0.9" height="1.3" fill="#0451a5" opacity="0.42"/>
<rect x="1284" y="825.5" width="0.9" height="1.3" fill="#0451a5" opacity="0.42"/>
<rect x="1285" y="825.5" width="0.9" height="1.3" fill="#0451a5" opacity="0.42"/>
<rect x="1286" y="825.5" width="0.9" height="1.3" fill="#0451a5" opacity="0.42"/>
<rect x="1287" y="825.5" width="0.9" height="1.3" fill="#0451a5" opacity="0.42"/>
<rect x="1288" y="825.5" width="0.9" height="1.3" fill="#0451a5" opacity="0.42"/>
<rect x="1290" y="825.5" width="0.9" height="1.3" fill="#0451a5" opacity="0.42"/>
<rect x="1291" y="825.5" width="0.9" height="1.3" fill="#0451a5" opacity="0.42"/>
<rect x="1292" y="825.5" width="0.9" height="1.3" fill="#0451a5" opacity="0.42"/>
<rect x="1293" y="825.5" width="0.9" height="1.3" fill="#0451a5" opacity="0.42"/>
<rect x="1294" y="825.5" width="0.9" height="1.3" fill="#0451a5" opacity="0.42"/>
<rect x="1295" y="825.5" width="0.9" height="1.3" fill="#0451a5" opacity="0.42"/>
<rect x="1296" y="825.5" width="0.9" height="1.3" fill="#0451a5" opacity="0.42"/>
<rect x="1284" y="827.5" width="0.9" height="1.3" fill="#0451a5" opacity="0.42"/>
<rect x="1285" y="827.5" width="0.9" height="1.3" fill="#0451a5" opacity="0.42"/>
<rect x="1286" y="827.5" width="0.9" height="1.3" fill="#0451a5" opacity="0.42"/>
<rect x="1287" y="827.5" width="0.9" height="1.3" fill="#0451a5" opacity="0.42"/>
<rect x="1289" y="827.5" width="0.9" height="1.3" fill="#0451a5" opacity="0.42"/>
<rect x="1290" y="827.5" width="0.9" height="1.3" fill="#0451a5" opacity="0.42"/>
<rect x="1291" y="827.5" width="0.9" height="1.3" fill="#0451a5" opacity="0.42"/>
<rect x="1292" y="827.5" width="0.9" height="1.3" fill="#0451a5" opacity="0.42"/>
<rect x="1293" y="827.5" width="0.9" height="1.3" fill="#0451a5" opacity="0.42"/>
<rect x="1294" y="827.5" width="0.9" height="1.3" fill="#0451a5" opacity="0.42"/>
<rect x="1284" y="829.5" width="0.9" height="1.3" fill="#0451a5" opacity="0.42"/>
<rect x="1285" y="829.5" width="0.9" height="1.3" fill="#0451a5" opacity="0.42"/>
<rect x="1286" y="829.5" width="0.9" height="1.3" fill="#0451a5" opacity="0.42"/>
<rect x="1287" y="829.5" width="0.9" height="1.3" fill="#0451a5" opacity="0.42"/>
<rect x="1288" y="829.5" width="0.9" height="1.3" fill="#0451a5" opacity="0.42"/>
<rect x="1289" y="829.5" width="0.9" height="1.3" fill="#0451a5" opacity="0.42"/>
<rect x="1290" y="829.5" width="0.9" height="1.3" fill="#0451a5" opacity="0.42"/>
<rect x="1291" y="829.5" width="0.9" height="1.3" fill="#0451a5" opacity="0.42"/>
<rect x="1292" y="829.5" width="0.9" height="1.3" fill="#0451a5" opacity="0.42"/>
<rect x="1294" y="829.5" width="0.9" height="1.3" fill="#0451a5" opacity="0.42"/>
<rect x="1295" y="829.5" width="0.9" height="1.3" fill="#0451a5" opacity="0.42"/>
<rect x="1296" y="829.5" width="0.9" height="1.3" fill="#0451a5" opacity="0.42"/>
<rect x="1297" y="829.5" width="0.9" height="1.3" fill="#0451a5" opacity="0.42"/>
<rect x="1298" y="829.5" width="0.9" height="1.3" fill="#0451a5" opacity="0.42"/>
<rect x="1299" y="829.5" width="0.9" height="1.3" fill="#0451a5" opacity="0.42"/>
<rect x="1300" y="829.5" width="0.9" height="1.3" fill="#0451a5" opacity="0.42"/>
<rect x="1284" y="831.5" width="0.9" height="1.3" fill="#0451a5" opacity="0.42"/>
<rect x="1285" y="831.5" width="0.9" height="1.3" fill="#0451a5" opacity="0.42"/>
<rect x="1286" y="831.5" width="0.9" height="1.3" fill="#0451a5" opacity="0.42"/>
<rect x="1287" y="831.5" width="0.9" height="1.3" fill="#0451a5" opacity="0.42"/>
<rect x="1288" y="831.5" width="0.9" height="1.3" fill="#0451a5" opacity="0.42"/>
<rect x="1289" y="831.5" width="0.9" height="1.3" fill="#0451a5" opacity="0.42"/>
<rect x="1291" y="831.5" width="0.9" height="1.3" fill="#0451a5" opacity="0.42"/>
<rect x="1292" y="831.5" width="0.9" height="1.3" fill="#0451a5" opacity="0.42"/>
<rect x="1293" y="831.5" width="0.9" height="1.3" fill="#0451a5" opacity="0.42"/>
<rect x="1294" y="831.5" width="0.9" height="1.3" fill="#0451a5" opacity="0.42"/>
<rect x="1295" y="831.5" width="0.9" height="1.3" fill="#0451a5" opacity="0.42"/>
<rect x="1296" y="831.5" width="0.9" height="1.3" fill="#0451a5" opacity="0.42"/>
<rect x="1297" y="831.5" width="0.9" height="1.3" fill="#0451a5" opacity="0.42"/>
<rect x="1298" y="831.5" width="0.9" height="1.3" fill="#0451a5" opacity="0.42"/>
<rect x="1299" y="831.5" width="0.9" height="1.3" fill="#0451a5" opacity="0.42"/>
<rect x="1284" y="833.5" width="0.9" height="1.3" fill="#0451a5" opacity="0.42"/>
<rect x="1285" y="833.5" width="0.9" height="1.3" fill="#0451a5" opacity="0.42"/>
<rect x="1286" y="833.5" width="0.9" height="1.3" fill="#0451a5" opacity="0.42"/>
<rect x="1287" y="833.5" width="0.9" height="1.3" fill="#0451a5" opacity="0.42"/>
<rect x="1288" y="833.5" width="0.9" height="1.3" fill="#0451a5" opacity="0.42"/>
<rect x="1289" y="833.5" width="0.9" height="1.3" fill="#0451a5" opacity="0.42"/>
<rect x="1291" y="833.5" width="0.9" height="1.3" fill="#0451a5" opacity="0.42"/>
<rect x="1292" y="833.5" width="0.9" height="1.3" fill="#0451a5" opacity="0.42"/>
<rect x="1293" y="833.5" width="0.9" height="1.3" fill="#0451a5" opacity="0.42"/>
<rect x="1294" y="833.5" width="0.9" height="1.3" fill="#0451a5" opacity="0.42"/>
<rect x="1295" y="833.5" width="0.9" height="1.3" fill="#0451a5" opacity="0.42"/>
<rect x="1296" y="833.5" width="0.9" height="1.3" fill="#0451a5" opacity="0.42"/>
<rect x="1297" y="833.5" width="0.9" height="1.3" fill="#0451a5" opacity="0.42"/>
<rect x="1298" y="833.5" width="0.9" height="1.3" fill="#0451a5" opacity="0.42"/>
<rect x="1299" y="833.5" width="0.9" height="1.3" fill="#0451a5" opacity="0.42"/>
<rect x="1300" y="833.5" width="0.9" height="1.3" fill="#0451a5" opacity="0.42"/>
<rect x="1301" y="833.5" width="0.9" height="1.3" fill="#0451a5" opacity="0.42"/>
<rect x="1284" y="835.5" width="0.9" height="1.3" fill="#0451a5" opacity="0.42"/>
<rect x="1285" y="835.5" width="0.9" height="1.3" fill="#0451a5" opacity="0.42"/>
<rect x="1286" y="835.5" width="0.9" height="1.3" fill="#0451a5" opacity="0.42"/>
<rect x="1287" y="835.5" width="0.9" height="1.3" fill="#0451a5" opacity="0.42"/>
<rect x="1288" y="835.5" width="0.9" height="1.3" fill="#0451a5" opacity="0.42"/>
<rect x="1290" y="835.5" width="0.9" height="1.3" fill="#0451a5" opacity="0.42"/>
<rect x="1291" y="835.5" width="0.9" height="1.3" fill="#0451a5" opacity="0.42"/>
<rect x="1292" y="835.5" width="0.9" height="1.3" fill="#0451a5" opacity="0.42"/>
<rect x="1293" y="835.5" width="0.9" height="1.3" fill="#0451a5" opacity="0.42"/>
<rect x="1294" y="835.5" width="0.9" height="1.3" fill="#0451a5" opacity="0.42"/>
<rect x="1295" y="835.5" width="0.9" height="1.3" fill="#0451a5" opacity="0.42"/>
<rect x="1296" y="835.5" width="0.9" height="1.3" fill="#0451a5" opacity="0.42"/>
<rect x="1297" y="835.5" width="0.9" height="1.3" fill="#0451a5" opacity="0.42"/>
<rect x="1298" y="835.5" width="0.9" height="1.3" fill="#0451a5" opacity="0.42"/>
<rect x="1284" y="837.5" width="0.9" height="1.3" fill="#0451a5" opacity="0.42"/>
<rect x="1285" y="837.5" width="0.9" height="1.3" fill="#0451a5" opacity="0.42"/>
<rect x="1286" y="837.5" width="0.9" height="1.3" fill="#0451a5" opacity="0.42"/>
<rect x="1287" y="837.5" width="0.9" height="1.3" fill="#0451a5" opacity="0.42"/>
<rect x="1288" y="837.5" width="0.9" height="1.3" fill="#0451a5" opacity="0.42"/>
<rect x="1289" y="837.5" width="0.9" height="1.3" fill="#0451a5" opacity="0.42"/>
<rect x="1290" y="837.5" width="0.9" height="1.3" fill="#0451a5" opacity="0.42"/>
<rect x="1291" y="837.5" width="0.9" height="1.3" fill="#0451a5" opacity="0.42"/>
<rect x="1292" y="837.5" width="0.9" height="1.3" fill="#0451a5" opacity="0.42"/>
<rect x="1293" y="837.5" width="0.9" height="1.3" fill="#0451a5" opacity="0.42"/>
<rect x="1294" y="837.5" width="0.9" height="1.3" fill="#0451a5" opacity="0.42"/>
<rect x="1295" y="837.5" width="0.9" height="1.3" fill="#0451a5" opacity="0.42"/>
<rect x="1296" y="837.5" width="0.9" height="1.3" fill="#0451a5" opacity="0.42"/>
<rect x="1297" y="837.5" width="0.9" height="1.3" fill="#0451a5" opacity="0.42"/>
<rect x="1299" y="837.5" width="0.9" height="1.3" fill="#0451a5" opacity="0.42"/>
<rect x="1300" y="837.5" width="0.9" height="1.3" fill="#0451a5" opacity="0.42"/>
<rect x="1301" y="837.5" width="0.9" height="1.3" fill="#0451a5" opacity="0.42"/>
<rect x="1302" y="837.5" width="0.9" height="1.3" fill="#0451a5" opacity="0.42"/>
<rect x="1303" y="837.5" width="0.9" height="1.3" fill="#0451a5" opacity="0.42"/>
<rect x="1304" y="837.5" width="0.9" height="1.3" fill="#0451a5" opacity="0.42"/>
<rect x="1305" y="837.5" width="0.9" height="1.3" fill="#0451a5" opacity="0.42"/>
<rect x="1306" y="837.5" width="0.9" height="1.3" fill="#0451a5" opacity="0.42"/>
<rect x="1307" y="837.5" width="0.9" height="1.3" fill="#0451a5" opacity="0.42"/>
<rect x="1308" y="837.5" width="0.9" height="1.3" fill="#0451a5" opacity="0.42"/>
<rect x="1284" y="839.5" width="0.9" height="1.3" fill="#0451a5" opacity="0.42"/>
<rect x="1285" y="839.5" width="0.9" height="1.3" fill="#0451a5" opacity="0.42"/>
<rect x="1286" y="839.5" width="0.9" height="1.3" fill="#0451a5" opacity="0.42"/>
<rect x="1287" y="839.5" width="0.9" height="1.3" fill="#0451a5" opacity="0.42"/>
<rect x="1288" y="839.5" width="0.9" height="1.3" fill="#0451a5" opacity="0.42"/>
<rect x="1289" y="839.5" width="0.9" height="1.3" fill="#0451a5" opacity="0.42"/>
<rect x="1290" y="839.5" width="0.9" height="1.3" fill="#0451a5" opacity="0.42"/>
<rect x="1292" y="839.5" width="0.9" height="1.3" fill="#0451a5" opacity="0.42"/>
<rect x="1293" y="839.5" width="0.9" height="1.3" fill="#0451a5" opacity="0.42"/>
<rect x="1294" y="839.5" width="0.9" height="1.3" fill="#0451a5" opacity="0.42"/>
<rect x="1295" y="839.5" width="0.9" height="1.3" fill="#0451a5" opacity="0.42"/>
<rect x="1296" y="839.5" width="0.9" height="1.3" fill="#0451a5" opacity="0.42"/>
<rect x="1297" y="839.5" width="0.9" height="1.3" fill="#0451a5" opacity="0.42"/>
<rect x="1298" y="839.5" width="0.9" height="1.3" fill="#0451a5" opacity="0.42"/>
<rect x="1299" y="839.5" width="0.9" height="1.3" fill="#0451a5" opacity="0.42"/>
<rect x="1300" y="839.5" width="0.9" height="1.3" fill="#0451a5" opacity="0.42"/>
<rect x="1284" y="841.5" width="0.9" height="1.3" fill="#0451a5" opacity="0.42"/>
<rect x="1285" y="841.5" width="0.9" height="1.3" fill="#0451a5" opacity="0.42"/>
<rect x="1286" y="841.5" width="0.9" height="1.3" fill="#0451a5" opacity="0.42"/>
<rect x="1287" y="841.5" width="0.9" height="1.3" fill="#0451a5" opacity="0.42"/>
<rect x="1288" y="841.5" width="0.9" height="1.3" fill="#0451a5" opacity="0.42"/>
<rect x="1289" y="841.5" width="0.9" height="1.3" fill="#0451a5" opacity="0.42"/>
<rect x="1291" y="841.5" width="0.9" height="1.3" fill="#0451a5" opacity="0.42"/>
<rect x="1292" y="841.5" width="0.9" height="1.3" fill="#0451a5" opacity="0.42"/>
<rect x="1293" y="841.5" width="0.9" height="1.3" fill="#0451a5" opacity="0.42"/>
<rect x="1294" y="841.5" width="0.9" height="1.3" fill="#0451a5" opacity="0.42"/>
<rect x="1295" y="841.5" width="0.9" height="1.3" fill="#0451a5" opacity="0.42"/>
<rect x="1296" y="841.5" width="0.9" height="1.3" fill="#0451a5" opacity="0.42"/>
<rect x="1297" y="841.5" width="0.9" height="1.3" fill="#0451a5" opacity="0.42"/>
<rect x="1284" y="843.5" width="0.9" height="1.3" fill="#0451a5" opacity="0.42"/>
<rect x="1285" y="843.5" width="0.9" height="1.3" fill="#0451a5" opacity="0.42"/>
<rect x="1286" y="843.5" width="0.9" height="1.3" fill="#0451a5" opacity="0.42"/>
<rect x="1287" y="843.5" width="0.9" height="1.3" fill="#0451a5" opacity="0.42"/>
<rect x="1288" y="843.5" width="0.9" height="1.3" fill="#0451a5" opacity="0.42"/>
<rect x="1289" y="843.5" width="0.9" height="1.3" fill="#0451a5" opacity="0.42"/>
<rect x="1291" y="843.5" width="0.9" height="1.3" fill="#0451a5" opacity="0.42"/>
<rect x="1292" y="843.5" width="0.9" height="1.3" fill="#0451a5" opacity="0.42"/>
<rect x="1293" y="843.5" width="0.9" height="1.3" fill="#0451a5" opacity="0.42"/>
<rect x="1294" y="843.5" width="0.9" height="1.3" fill="#0451a5" opacity="0.42"/>
<rect x="1295" y="843.5" width="0.9" height="1.3" fill="#0451a5" opacity="0.42"/>
<rect x="1296" y="843.5" width="0.9" height="1.3" fill="#0451a5" opacity="0.42"/>
<rect x="1284" y="845.5" width="0.9" height="1.3" fill="#0451a5" opacity="0.42"/>
<rect x="1285" y="845.5" width="0.9" height="1.3" fill="#0451a5" opacity="0.42"/>
<rect x="1286" y="845.5" width="0.9" height="1.3" fill="#0451a5" opacity="0.42"/>
<rect x="1287" y="845.5" width="0.9" height="1.3" fill="#0451a5" opacity="0.42"/>
<rect x="1288" y="845.5" width="0.9" height="1.3" fill="#0451a5" opacity="0.42"/>
<rect x="1289" y="845.5" width="0.9" height="1.3" fill="#0451a5" opacity="0.42"/>
<rect x="1291" y="845.5" width="0.9" height="1.3" fill="#0451a5" opacity="0.42"/>
<rect x="1292" y="845.5" width="0.9" height="1.3" fill="#0451a5" opacity="0.42"/>
<rect x="1293" y="845.5" width="0.9" height="1.3" fill="#0451a5" opacity="0.42"/>
<rect x="1294" y="845.5" width="0.9" height="1.3" fill="#0451a5" opacity="0.42"/>
<rect x="1295" y="845.5" width="0.9" height="1.3" fill="#0451a5" opacity="0.42"/>
<rect x="1296" y="845.5" width="0.9" height="1.3" fill="#0451a5" opacity="0.42"/>
<rect x="1297" y="845.5" width="0.9" height="1.3" fill="#0451a5" opacity="0.42"/>
<rect x="1298" y="845.5" width="0.9" height="1.3" fill="#0451a5" opacity="0.42"/>
<rect x="1299" y="845.5" width="0.9" height="1.3" fill="#0451a5" opacity="0.42"/>
<rect x="1284" y="847.5" width="0.9" height="1.3" fill="#0451a5" opacity="0.42"/>
<rect x="1285" y="847.5" width="0.9" height="1.3" fill="#0451a5" opacity="0.42"/>
<rect x="1286" y="847.5" width="0.9" height="1.3" fill="#0451a5" opacity="0.42"/>
<rect x="1287" y="847.5" width="0.9" height="1.3" fill="#0451a5" opacity="0.42"/>
<rect x="1288" y="847.5" width="0.9" height="1.3" fill="#0451a5" opacity="0.42"/>
<rect x="1290" y="847.5" width="0.9" height="1.3" fill="#0451a5" opacity="0.42"/>
<rect x="1291" y="847.5" width="0.9" height="1.3" fill="#0451a5" opacity="0.42"/>
<rect x="1292" y="847.5" width="0.9" height="1.3" fill="#0451a5" opacity="0.42"/>
<rect x="1293" y="847.5" width="0.9" height="1.3" fill="#0451a5" opacity="0.42"/>
<rect x="1294" y="847.5" width="0.9" height="1.3" fill="#0451a5" opacity="0.42"/>
<rect x="1295" y="847.5" width="0.9" height="1.3" fill="#0451a5" opacity="0.42"/>
<rect x="1296" y="847.5" width="0.9" height="1.3" fill="#0451a5" opacity="0.42"/>
<rect x="1297" y="847.5" width="0.9" height="1.3" fill="#0451a5" opacity="0.42"/>
<rect x="1298" y="847.5" width="0.9" height="1.3" fill="#0451a5" opacity="0.42"/>
<rect x="1282" y="849.5" width="0.9" height="1.3" fill="#000000" opacity="0.42"/>
<rect x="1280" y="851.5" width="0.9" height="1.3" fill="#000000" opacity="0.42"/>
<rect x="1281" y="851.5" width="0.9" height="1.3" fill="#000000" opacity="0.42"/>
<rect x="1280" y="853.5" width="0.9" height="1.3" fill="#000000" opacity="0.42"/>
<rect x="1282" y="855.5" width="0.9" height="1.3" fill="#a31515" opacity="0.42"/>
<rect x="1283" y="855.5" width="0.9" height="1.3" fill="#a31515" opacity="0.42"/>
<rect x="1284" y="855.5" width="0.9" height="1.3" fill="#a31515" opacity="0.42"/>
<rect x="1285" y="855.5" width="0.9" height="1.3" fill="#a31515" opacity="0.42"/>
<rect x="1286" y="855.5" width="0.9" height="1.3" fill="#a31515" opacity="0.42"/>
<rect x="1287" y="855.5" width="0.9" height="1.3" fill="#a31515" opacity="0.42"/>
<rect x="1288" y="855.5" width="0.9" height="1.3" fill="#a31515" opacity="0.42"/>
<rect x="1289" y="855.5" width="0.9" height="1.3" fill="#a31515" opacity="0.42"/>
<rect x="1290" y="855.5" width="0.9" height="1.3" fill="#a31515" opacity="0.42"/>
<rect x="1291" y="855.5" width="0.9" height="1.3" fill="#a31515" opacity="0.42"/>
<rect x="1292" y="855.5" width="0.9" height="1.3" fill="#a31515" opacity="0.42"/>
<rect x="1293" y="855.5" width="0.9" height="1.3" fill="#a31515" opacity="0.42"/>
<rect x="1294" y="855.5" width="0.9" height="1.3" fill="#a31515" opacity="0.42"/>
<rect x="1295" y="855.5" width="0.9" height="1.3" fill="#a31515" opacity="0.42"/>
<rect x="1296" y="855.5" width="0.9" height="1.3" fill="#a31515" opacity="0.42"/>
<rect x="1297" y="855.5" width="0.9" height="1.3" fill="#000000" opacity="0.42"/>
<rect x="1299" y="855.5" width="0.9" height="1.3" fill="#098658" opacity="0.42"/>
<rect x="1300" y="855.5" width="0.9" height="1.3" fill="#098658" opacity="0.42"/>
<rect x="1301" y="855.5" width="0.9" height="1.3" fill="#098658" opacity="0.42"/>
<rect x="1302" y="855.5" width="0.9" height="1.3" fill="#098658" opacity="0.42"/>
<rect x="1303" y="855.5" width="0.9" height="1.3" fill="#098658" opacity="0.42"/>
<rect x="1304" y="855.5" width="0.9" height="1.3" fill="#098658" opacity="0.42"/>
<rect x="1305" y="855.5" width="0.9" height="1.3" fill="#098658" opacity="0.42"/>
<rect x="1306" y="855.5" width="0.9" height="1.3" fill="#098658" opacity="0.42"/>
<rect x="1307" y="855.5" width="0.9" height="1.3" fill="#098658" opacity="0.42"/>
<rect x="1282" y="857.5" width="0.9" height="1.3" fill="#a31515" opacity="0.42"/>
<rect x="1283" y="857.5" width="0.9" height="1.3" fill="#a31515" opacity="0.42"/>
<rect x="1284" y="857.5" width="0.9" height="1.3" fill="#a31515" opacity="0.42"/>
<rect x="1285" y="857.5" width="0.9" height="1.3" fill="#a31515" opacity="0.42"/>
<rect x="1286" y="857.5" width="0.9" height="1.3" fill="#a31515" opacity="0.42"/>
<rect x="1287" y="857.5" width="0.9" height="1.3" fill="#a31515" opacity="0.42"/>
<rect x="1288" y="857.5" width="0.9" height="1.3" fill="#a31515" opacity="0.42"/>
<rect x="1289" y="857.5" width="0.9" height="1.3" fill="#a31515" opacity="0.42"/>
<rect x="1290" y="857.5" width="0.9" height="1.3" fill="#a31515" opacity="0.42"/>
<rect x="1291" y="857.5" width="0.9" height="1.3" fill="#000000" opacity="0.42"/>
<rect x="1293" y="857.5" width="0.9" height="1.3" fill="#0451a5" opacity="0.42"/>
<rect x="1294" y="857.5" width="0.9" height="1.3" fill="#0451a5" opacity="0.42"/>
<rect x="1295" y="857.5" width="0.9" height="1.3" fill="#0451a5" opacity="0.42"/>
<rect x="1296" y="857.5" width="0.9" height="1.3" fill="#0451a5" opacity="0.42"/>
<rect x="1297" y="857.5" width="0.9" height="1.3" fill="#0451a5" opacity="0.42"/>
<rect x="1282" y="859.5" width="0.9" height="1.3" fill="#a31515" opacity="0.42"/>
<rect x="1283" y="859.5" width="0.9" height="1.3" fill="#a31515" opacity="0.42"/>
<rect x="1284" y="859.5" width="0.9" height="1.3" fill="#a31515" opacity="0.42"/>
<rect x="1285" y="859.5" width="0.9" height="1.3" fill="#a31515" opacity="0.42"/>
<rect x="1286" y="859.5" width="0.9" height="1.3" fill="#a31515" opacity="0.42"/>
<rect x="1287" y="859.5" width="0.9" height="1.3" fill="#a31515" opacity="0.42"/>
<rect x="1288" y="859.5" width="0.9" height="1.3" fill="#a31515" opacity="0.42"/>
<rect x="1289" y="859.5" width="0.9" height="1.3" fill="#a31515" opacity="0.42"/>
<rect x="1290" y="859.5" width="0.9" height="1.3" fill="#000000" opacity="0.42"/>
<rect x="1292" y="859.5" width="0.9" height="1.3" fill="#000000" opacity="0.42"/>
<rect x="1293" y="859.5" width="0.9" height="1.3" fill="#000000" opacity="0.42"/>
<rect x="1280" y="861.5" width="0.9" height="1.3" fill="#000000" opacity="0.42"/>
<rect x="1281" y="861.5" width="0.9" height="1.3" fill="#000000" opacity="0.42"/>
<rect x="1280" y="863.5" width="0.9" height="1.3" fill="#000000" opacity="0.42"/>
<rect x="1282" y="865.5" width="0.9" height="1.3" fill="#a31515" opacity="0.42"/>
<rect x="1283" y="865.5" width="0.9" height="1.3" fill="#a31515" opacity="0.42"/>
<rect x="1284" y="865.5" width="0.9" height="1.3" fill="#a31515" opacity="0.42"/>
<rect x="1285" y="865.5" width="0.9" height="1.3" fill="#a31515" opacity="0.42"/>
<rect x="1286" y="865.5" width="0.9" height="1.3" fill="#a31515" opacity="0.42"/>
<rect x="1287" y="865.5" width="0.9" height="1.3" fill="#a31515" opacity="0.42"/>
<rect x="1288" y="865.5" width="0.9" height="1.3" fill="#a31515" opacity="0.42"/>
<rect x="1289" y="865.5" width="0.9" height="1.3" fill="#a31515" opacity="0.42"/>
<rect x="1290" y="865.5" width="0.9" height="1.3" fill="#a31515" opacity="0.42"/>
<rect x="1291" y="865.5" width="0.9" height="1.3" fill="#a31515" opacity="0.42"/>
<rect x="1292" y="865.5" width="0.9" height="1.3" fill="#a31515" opacity="0.42"/>
<rect x="1293" y="865.5" width="0.9" height="1.3" fill="#a31515" opacity="0.42"/>
<rect x="1294" y="865.5" width="0.9" height="1.3" fill="#a31515" opacity="0.42"/>
<rect x="1295" y="865.5" width="0.9" height="1.3" fill="#a31515" opacity="0.42"/>
<rect x="1296" y="865.5" width="0.9" height="1.3" fill="#a31515" opacity="0.42"/>
<rect x="1297" y="865.5" width="0.9" height="1.3" fill="#000000" opacity="0.42"/>
<rect x="1299" y="865.5" width="0.9" height="1.3" fill="#098658" opacity="0.42"/>
<rect x="1300" y="865.5" width="0.9" height="1.3" fill="#098658" opacity="0.42"/>
<rect x="1301" y="865.5" width="0.9" height="1.3" fill="#098658" opacity="0.42"/>
<rect x="1302" y="865.5" width="0.9" height="1.3" fill="#098658" opacity="0.42"/>
<rect x="1303" y="865.5" width="0.9" height="1.3" fill="#098658" opacity="0.42"/>
<rect x="1304" y="865.5" width="0.9" height="1.3" fill="#098658" opacity="0.42"/>
<rect x="1305" y="865.5" width="0.9" height="1.3" fill="#098658" opacity="0.42"/>
<rect x="1306" y="865.5" width="0.9" height="1.3" fill="#098658" opacity="0.42"/>
<rect x="1307" y="865.5" width="0.9" height="1.3" fill="#098658" opacity="0.42"/>
<rect x="1282" y="867.5" width="0.9" height="1.3" fill="#a31515" opacity="0.42"/>
<rect x="1283" y="867.5" width="0.9" height="1.3" fill="#a31515" opacity="0.42"/>
<rect x="1284" y="867.5" width="0.9" height="1.3" fill="#a31515" opacity="0.42"/>
<rect x="1285" y="867.5" width="0.9" height="1.3" fill="#a31515" opacity="0.42"/>
<rect x="1286" y="867.5" width="0.9" height="1.3" fill="#a31515" opacity="0.42"/>
<rect x="1287" y="867.5" width="0.9" height="1.3" fill="#a31515" opacity="0.42"/>
<rect x="1288" y="867.5" width="0.9" height="1.3" fill="#a31515" opacity="0.42"/>
<rect x="1289" y="867.5" width="0.9" height="1.3" fill="#a31515" opacity="0.42"/>
<rect x="1290" y="867.5" width="0.9" height="1.3" fill="#a31515" opacity="0.42"/>
<rect x="1291" y="867.5" width="0.9" height="1.3" fill="#000000" opacity="0.42"/>
<rect x="1293" y="867.5" width="0.9" height="1.3" fill="#0451a5" opacity="0.42"/>
<rect x="1294" y="867.5" width="0.9" height="1.3" fill="#0451a5" opacity="0.42"/>
<rect x="1295" y="867.5" width="0.9" height="1.3" fill="#0451a5" opacity="0.42"/>
<rect x="1296" y="867.5" width="0.9" height="1.3" fill="#0451a5" opacity="0.42"/>
<rect x="1297" y="867.5" width="0.9" height="1.3" fill="#0451a5" opacity="0.42"/>
<rect x="1298" y="867.5" width="0.9" height="1.3" fill="#0451a5" opacity="0.42"/>
<rect x="1300" y="867.5" width="0.9" height="1.3" fill="#0451a5" opacity="0.42"/>
<rect x="1301" y="867.5" width="0.9" height="1.3" fill="#0451a5" opacity="0.42"/>
<rect x="1303" y="867.5" width="0.9" height="1.3" fill="#0451a5" opacity="0.42"/>
<rect x="1305" y="867.5" width="0.9" height="1.3" fill="#0451a5" opacity="0.42"/>
<rect x="1306" y="867.5" width="0.9" height="1.3" fill="#0451a5" opacity="0.42"/>
<rect x="1307" y="867.5" width="0.9" height="1.3" fill="#0451a5" opacity="0.42"/>
<rect x="1308" y="867.5" width="0.9" height="1.3" fill="#0451a5" opacity="0.42"/>
<rect x="1310" y="867.5" width="0.9" height="1.3" fill="#0451a5" opacity="0.42"/>
<rect x="1311" y="867.5" width="0.9" height="1.3" fill="#0451a5" opacity="0.42"/>
<rect x="1312" y="867.5" width="0.9" height="1.3" fill="#0451a5" opacity="0.42"/>
<rect x="1313" y="867.5" width="0.9" height="1.3" fill="#0451a5" opacity="0.42"/>
<rect x="1314" y="867.5" width="0.9" height="1.3" fill="#0451a5" opacity="0.42"/>
<rect x="1315" y="867.5" width="0.9" height="1.3" fill="#0451a5" opacity="0.42"/>
<rect x="1316" y="867.5" width="0.9" height="1.3" fill="#0451a5" opacity="0.42"/>
<rect x="1317" y="867.5" width="0.9" height="1.3" fill="#0451a5" opacity="0.42"/>
<rect x="1319" y="867.5" width="0.9" height="1.3" fill="#0451a5" opacity="0.42"/>
<rect x="1320" y="867.5" width="0.9" height="1.3" fill="#0451a5" opacity="0.42"/>
<rect x="1321" y="867.5" width="0.9" height="1.3" fill="#0451a5" opacity="0.42"/>
<rect x="1323" y="867.5" width="0.9" height="1.3" fill="#0451a5" opacity="0.42"/>
<rect x="1324" y="867.5" width="0.9" height="1.3" fill="#0451a5" opacity="0.42"/>
<rect x="1325" y="867.5" width="0.9" height="1.3" fill="#0451a5" opacity="0.42"/>
<rect x="1327" y="867.5" width="0.9" height="1.3" fill="#0451a5" opacity="0.42"/>
<rect x="1328" y="867.5" width="0.9" height="1.3" fill="#0451a5" opacity="0.42"/>
<rect x="1329" y="867.5" width="0.9" height="1.3" fill="#0451a5" opacity="0.42"/>
<rect x="1331" y="867.5" width="0.9" height="1.3" fill="#0451a5" opacity="0.42"/>
<rect x="1332" y="867.5" width="0.9" height="1.3" fill="#0451a5" opacity="0.42"/>
<rect x="1334" y="867.5" width="0.9" height="1.3" fill="#0451a5" opacity="0.42"/>
<rect x="1335" y="867.5" width="0.9" height="1.3" fill="#0451a5" opacity="0.42"/>
<rect x="1336" y="867.5" width="0.9" height="1.3" fill="#0451a5" opacity="0.42"/>
<rect x="1337" y="867.5" width="0.9" height="1.3" fill="#0451a5" opacity="0.42"/>
<rect x="1338" y="867.5" width="0.9" height="1.3" fill="#0451a5" opacity="0.42"/>
<rect x="1339" y="867.5" width="0.9" height="1.3" fill="#0451a5" opacity="0.42"/>
<rect x="1340" y="867.5" width="0.9" height="1.3" fill="#0451a5" opacity="0.42"/>
<rect x="1342" y="867.5" width="0.9" height="1.3" fill="#0451a5" opacity="0.42"/>
<rect x="1343" y="867.5" width="0.9" height="1.3" fill="#0451a5" opacity="0.42"/>
<rect x="1345" y="867.5" width="0.9" height="1.3" fill="#0451a5" opacity="0.42"/>
<rect x="1346" y="867.5" width="0.9" height="1.3" fill="#0451a5" opacity="0.42"/>
<rect x="1348" y="867.5" width="0.9" height="1.3" fill="#0451a5" opacity="0.42"/>
<rect x="1349" y="867.5" width="0.9" height="1.3" fill="#0451a5" opacity="0.42"/>
<rect x="1351" y="867.5" width="0.9" height="1.3" fill="#0451a5" opacity="0.42"/>
<rect x="1352" y="867.5" width="0.9" height="1.3" fill="#0451a5" opacity="0.42"/>
<rect x="1353" y="867.5" width="0.9" height="1.3" fill="#0451a5" opacity="0.42"/>
<rect x="1354" y="867.5" width="0.9" height="1.3" fill="#0451a5" opacity="0.42"/>
<rect x="1356" y="867.5" width="0.9" height="1.3" fill="#0451a5" opacity="0.42"/>
<rect x="1357" y="867.5" width="0.9" height="1.3" fill="#0451a5" opacity="0.42"/>
<rect x="1358" y="867.5" width="0.9" height="1.3" fill="#0451a5" opacity="0.42"/>
<rect x="1359" y="867.5" width="0.9" height="1.3" fill="#0451a5" opacity="0.42"/>
<rect x="1360" y="867.5" width="0.9" height="1.3" fill="#0451a5" opacity="0.42"/>
<rect x="1362" y="867.5" width="0.9" height="1.3" fill="#0451a5" opacity="0.42"/>
<rect x="1363" y="867.5" width="0.9" height="1.3" fill="#0451a5" opacity="0.42"/>
<rect x="1364" y="867.5" width="0.9" height="1.3" fill="#0451a5" opacity="0.42"/>
<rect x="1366" y="867.5" width="0.9" height="1.3" fill="#0451a5" opacity="0.42"/>
<rect x="1367" y="867.5" width="0.9" height="1.3" fill="#0451a5" opacity="0.42"/>
<rect x="1369" y="867.5" width="0.9" height="1.3" fill="#0451a5" opacity="0.42"/>
<rect x="1370" y="867.5" width="0.9" height="1.3" fill="#0451a5" opacity="0.42"/>
<rect x="1371" y="867.5" width="0.9" height="1.3" fill="#0451a5" opacity="0.42"/>
<rect x="1372" y="867.5" width="0.9" height="1.3" fill="#0451a5" opacity="0.42"/>
<rect x="1373" y="867.5" width="0.9" height="1.3" fill="#0451a5" opacity="0.42"/>
<rect x="1374" y="867.5" width="0.9" height="1.3" fill="#0451a5" opacity="0.42"/>
<rect x="1375" y="867.5" width="0.9" height="1.3" fill="#0451a5" opacity="0.42"/>
<rect x="1376" y="867.5" width="0.9" height="1.3" fill="#0451a5" opacity="0.42"/>
<rect x="1377" y="867.5" width="0.9" height="1.3" fill="#0451a5" opacity="0.42"/>
<rect x="1378" y="867.5" width="0.9" height="1.3" fill="#0451a5" opacity="0.42"/>
<rect x="1380" y="867.5" width="0.9" height="1.3" fill="#0451a5" opacity="0.42"/>
<rect x="1381" y="867.5" width="0.9" height="1.3" fill="#0451a5" opacity="0.42"/>
<rect x="1383" y="867.5" width="0.9" height="1.3" fill="#0451a5" opacity="0.42"/>
<rect x="1384" y="867.5" width="0.9" height="1.3" fill="#0451a5" opacity="0.42"/>
<rect x="1385" y="867.5" width="0.9" height="1.3" fill="#0451a5" opacity="0.42"/>
<rect x="1386" y="867.5" width="0.9" height="1.3" fill="#0451a5" opacity="0.42"/>
<rect x="1387" y="867.5" width="0.9" height="1.3" fill="#0451a5" opacity="0.42"/>
<rect x="1389" y="867.5" width="0.9" height="1.3" fill="#0451a5" opacity="0.42"/>
<rect x="1390" y="867.5" width="0.9" height="1.3" fill="#0451a5" opacity="0.42"/>
<rect x="1391" y="867.5" width="0.9" height="1.3" fill="#0451a5" opacity="0.42"/>
<rect x="1282" y="869.5" width="0.9" height="1.3" fill="#a31515" opacity="0.42"/>
<rect x="1283" y="869.5" width="0.9" height="1.3" fill="#a31515" opacity="0.42"/>
<rect x="1284" y="869.5" width="0.9" height="1.3" fill="#a31515" opacity="0.42"/>
<rect x="1285" y="869.5" width="0.9" height="1.3" fill="#a31515" opacity="0.42"/>
<rect x="1286" y="869.5" width="0.9" height="1.3" fill="#a31515" opacity="0.42"/>
<rect x="1287" y="869.5" width="0.9" height="1.3" fill="#a31515" opacity="0.42"/>
<rect x="1288" y="869.5" width="0.9" height="1.3" fill="#a31515" opacity="0.42"/>
<rect x="1289" y="869.5" width="0.9" height="1.3" fill="#a31515" opacity="0.42"/>
<rect x="1290" y="869.5" width="0.9" height="1.3" fill="#000000" opacity="0.42"/>
<rect x="1292" y="869.5" width="0.9" height="1.3" fill="#000000" opacity="0.42"/>
<rect x="1284" y="871.5" width="0.9" height="1.3" fill="#0451a5" opacity="0.42"/>
<rect x="1285" y="871.5" width="0.9" height="1.3" fill="#0451a5" opacity="0.42"/>
<rect x="1286" y="871.5" width="0.9" height="1.3" fill="#0451a5" opacity="0.42"/>
<rect x="1287" y="871.5" width="0.9" height="1.3" fill="#0451a5" opacity="0.42"/>
<rect x="1288" y="871.5" width="0.9" height="1.3" fill="#0451a5" opacity="0.42"/>
<rect x="1289" y="871.5" width="0.9" height="1.3" fill="#0451a5" opacity="0.42"/>
<rect x="1290" y="871.5" width="0.9" height="1.3" fill="#0451a5" opacity="0.42"/>
<rect x="1291" y="871.5" width="0.9" height="1.3" fill="#0451a5" opacity="0.42"/>
<rect x="1284" y="873.5" width="0.9" height="1.3" fill="#0451a5" opacity="0.42"/>
<rect x="1285" y="873.5" width="0.9" height="1.3" fill="#0451a5" opacity="0.42"/>
<rect x="1286" y="873.5" width="0.9" height="1.3" fill="#0451a5" opacity="0.42"/>
<rect x="1287" y="873.5" width="0.9" height="1.3" fill="#0451a5" opacity="0.42"/>
<rect x="1288" y="873.5" width="0.9" height="1.3" fill="#0451a5" opacity="0.42"/>
<rect x="1289" y="873.5" width="0.9" height="1.3" fill="#0451a5" opacity="0.42"/>
<rect x="1290" y="873.5" width="0.9" height="1.3" fill="#0451a5" opacity="0.42"/>
<rect x="1284" y="875.5" width="0.9" height="1.3" fill="#0451a5" opacity="0.42"/>
<rect x="1285" y="875.5" width="0.9" height="1.3" fill="#0451a5" opacity="0.42"/>
<rect x="1286" y="875.5" width="0.9" height="1.3" fill="#0451a5" opacity="0.42"/>
<rect x="1287" y="875.5" width="0.9" height="1.3" fill="#0451a5" opacity="0.42"/>
<rect x="1288" y="875.5" width="0.9" height="1.3" fill="#0451a5" opacity="0.42"/>
<rect x="1290" y="875.5" width="0.9" height="1.3" fill="#0451a5" opacity="0.42"/>
<rect x="1291" y="875.5" width="0.9" height="1.3" fill="#0451a5" opacity="0.42"/>
<rect x="1292" y="875.5" width="0.9" height="1.3" fill="#0451a5" opacity="0.42"/>
<rect x="1293" y="875.5" width="0.9" height="1.3" fill="#0451a5" opacity="0.42"/>
<rect x="1294" y="875.5" width="0.9" height="1.3" fill="#0451a5" opacity="0.42"/>
<rect x="1295" y="875.5" width="0.9" height="1.3" fill="#0451a5" opacity="0.42"/>
<rect x="1296" y="875.5" width="0.9" height="1.3" fill="#0451a5" opacity="0.42"/>
<rect x="1284" y="877.5" width="0.9" height="1.3" fill="#0451a5" opacity="0.42"/>
<rect x="1285" y="877.5" width="0.9" height="1.3" fill="#0451a5" opacity="0.42"/>
<rect x="1286" y="877.5" width="0.9" height="1.3" fill="#0451a5" opacity="0.42"/>
<rect x="1287" y="877.5" width="0.9" height="1.3" fill="#0451a5" opacity="0.42"/>
<rect x="1288" y="877.5" width="0.9" height="1.3" fill="#0451a5" opacity="0.42"/>
<rect x="1289" y="877.5" width="0.9" height="1.3" fill="#0451a5" opacity="0.42"/>
<rect x="1290" y="877.5" width="0.9" height="1.3" fill="#0451a5" opacity="0.42"/>
<rect x="1291" y="877.5" width="0.9" height="1.3" fill="#0451a5" opacity="0.42"/>
<rect x="1284" y="879.5" width="0.9" height="1.3" fill="#0451a5" opacity="0.42"/>
<rect x="1285" y="879.5" width="0.9" height="1.3" fill="#0451a5" opacity="0.42"/>
<rect x="1286" y="879.5" width="0.9" height="1.3" fill="#0451a5" opacity="0.42"/>
<rect x="1287" y="879.5" width="0.9" height="1.3" fill="#0451a5" opacity="0.42"/>
<rect x="1288" y="879.5" width="0.9" height="1.3" fill="#0451a5" opacity="0.42"/>
<rect x="1289" y="879.5" width="0.9" height="1.3" fill="#0451a5" opacity="0.42"/>
<rect x="1291" y="879.5" width="0.9" height="1.3" fill="#0451a5" opacity="0.42"/>
<rect x="1292" y="879.5" width="0.9" height="1.3" fill="#0451a5" opacity="0.42"/>
<rect x="1293" y="879.5" width="0.9" height="1.3" fill="#0451a5" opacity="0.42"/>
<rect x="1294" y="879.5" width="0.9" height="1.3" fill="#0451a5" opacity="0.42"/>
<rect x="1295" y="879.5" width="0.9" height="1.3" fill="#0451a5" opacity="0.42"/>
<rect x="1296" y="879.5" width="0.9" height="1.3" fill="#0451a5" opacity="0.42"/>
<rect x="1297" y="879.5" width="0.9" height="1.3" fill="#0451a5" opacity="0.42"/>
<rect x="1298" y="879.5" width="0.9" height="1.3" fill="#0451a5" opacity="0.42"/>
<rect x="1299" y="879.5" width="0.9" height="1.3" fill="#0451a5" opacity="0.42"/>
<rect x="1282" y="881.5" width="0.9" height="1.3" fill="#000000" opacity="0.42"/>
<rect x="1280" y="883.5" width="0.9" height="1.3" fill="#000000" opacity="0.42"/>
<rect x="1278" y="885.5" width="0.9" height="1.3" fill="#000000" opacity="0.42"/>
<rect x="1276" y="887.5" width="0.9" height="1.3" fill="#000000" opacity="0.42"/>
<rect x="1276" y="797.3" width="110" height="1.7" fill="#ecbd7a" opacity="0.75"/>
<rect x="1285" y="805.3" width="13" height="1.8" fill="#d18616"/>
</g>
<rect x="1387" y="785" width="1" height="409" fill="#e6e6e6"/>
<rect x="1388" y="850" width="8.5" height="9" fill="#e8c28a"/>
<rect x="1388" y="885" width="8.5" height="9" fill="#e8c28a"/>
<rect x="1388" y="883" width="18" height="2" fill="#3c3c3c"/>
<rect x="1385" y="1087" width="2" height="24" fill="#ffffcc"/>
<rect x="1385.5" y="991" width="1" height="7" fill="#6d8fc4"/>
<rect x="684" y="785" width="565" height="44" fill="#f3f3f3" filter="url(#sh2)"/>
<rect x="712" y="789" width="297.5" height="33.5" rx="2" fill="#ffffff"/>
<text x="721" y="813" font-size="17" fill="#616161" textLength="100" lengthAdjust="spacingAndGlyphs">satya nadella</text>
<text x="926.5" y="809.8" font-size="15" fill="#616161" textLength="17" lengthAdjust="spacingAndGlyphs">Aa</text>
<text x="954.5" y="808.4" font-size="15" fill="#616161" textLength="20" lengthAdjust="spacingAndGlyphs">ab</text>
<path d="M953.8 809 V812.3 H975.3 V809" stroke="#616161" stroke-width="1.1" fill="none"/>
<rect x="986.2" y="807.8" width="5.5" height="5" fill="#616161"/>
<path d="M997.8 797.5 V807 M993.5 800 L1002 804.5 M1002 800 L993.5 804.5" stroke="#616161" stroke-width="1.4" fill="none"/>
<text x="1017.5" y="813.8" font-size="16" fill="#616161" textLength="39.5" lengthAdjust="spacingAndGlyphs">3 of 3</text>
<g stroke="#616161" stroke-width="1.3" fill="none"><path d="M1130 797.2 V813 M1123 804 L1130 797.2 L1137 804"/><path d="M1163.5 797 V812.8 M1156.5 806 L1163.5 812.8 L1170.5 806"/><path d="M1186.7 799.8 H1202 M1186.7 805.3 H1206 M1186.7 810.8 H1199"/><path d="M1223.5 799.5 L1234.8 810.8 M1234.8 799.5 L1223.5 810.8"/></g>
<rect x="1242" y="407.5" width="240" height="104" rx="2" fill="#ffffff" filter="url(#sh)"/>
<path d="M1253 422.5 H1274 L1266 432 V441 H1261 V432 Z" stroke="#0078d4" stroke-width="1.4" fill="none" stroke-linejoin="round"/>
<text x="1285" y="439.2" font-size="17" fill="#403f3e" textLength="86" lengthAdjust="spacingAndGlyphs">Query view</text>
<rect x="1243" y="455" width="227" height="53" fill="#f3f2f1"/>
<g fill="none" stroke="#0078d4" stroke-width="1.4"><path d="M1259.5 469.5 C1256 469.5 1257 473 1257 476 C1257 478.3 1256 479.5 1254 479.5 C1256 479.5 1257 480.7 1257 483 C1257 486 1256 489.5 1259.5 489.5"/><path d="M1267.5 469.5 C1271 469.5 1270 473 1270 476 C1270 478.3 1271 479.5 1273 479.5 C1271 479.5 1270 480.7 1270 483 C1270 486 1271 489.5 1267.5 489.5"/></g>
<text x="1285" y="486.5" font-size="17" fill="#403f3e" textLength="81" lengthAdjust="spacingAndGlyphs">JSON view</text>
<rect x="14.50" y="407.50" width="454.00" height="193.00" fill="none" stroke="#ed1c24" stroke-width="5"/>
<rect x="1241.50" y="454.50" width="222.00" height="55.00" fill="none" stroke="#ed1c24" stroke-width="5"/>
<rect x="684.50" y="782.50" width="576.00" height="51.00" fill="none" stroke="#ed1c24" stroke-width="5"/>
</svg>
</body></html>
